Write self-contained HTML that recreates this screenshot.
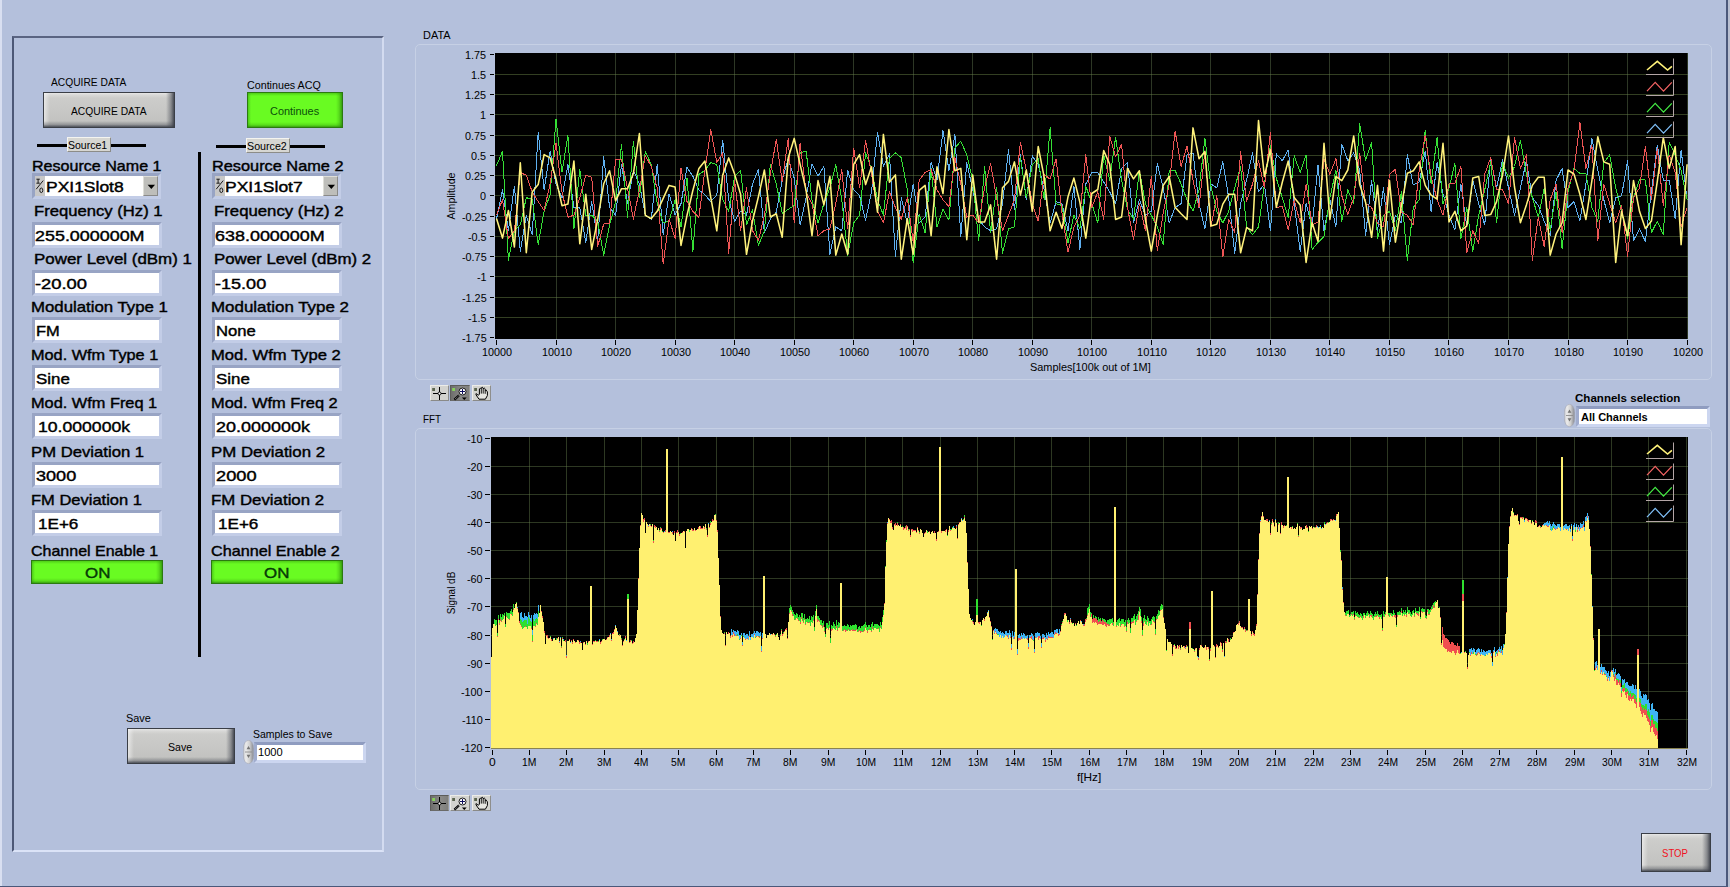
<!DOCTYPE html>
<html><head><meta charset="utf-8"><title>Front Panel</title>
<style>
html,body{margin:0;padding:0}
body{width:1730px;height:887px;overflow:hidden;background:#b4c0dc;position:relative;font-family:"Liberation Sans",sans-serif}
body>div,body>svg,body>span{position:absolute;display:block}
.t{white-space:nowrap;line-height:1;transform-origin:0 0}
.fld{background:#fff;border-style:solid;border-width:3px;border-color:#98a4c4 #c3cde7 #c3cde7 #98a4c4}
.fld2{background:#fff;border-style:solid;border-width:3px;border-color:#8f9cc0 #ccd6f0 #ccd6f0 #a0acce}
.gbtn{box-sizing:border-box;border:1px solid #3a3e46;background:
 linear-gradient(to left,rgba(58,62,72,.9),rgba(70,74,84,.5) 3px,rgba(90,94,100,0) 8px),
 linear-gradient(to top,rgba(58,62,72,.85),rgba(80,84,92,.4) 2.5px,rgba(90,94,100,0) 6px),
 linear-gradient(to right,rgba(255,255,255,.55),rgba(255,255,255,.25) 3px,rgba(255,255,255,0) 6px),
 linear-gradient(to bottom,rgba(255,255,255,.5),rgba(255,255,255,.2) 2px,rgba(255,255,255,0) 5px),
 linear-gradient(#cfcfcd,#c0c0be)}
.grn{box-sizing:border-box;border:1px solid #2b7a10;background:
 linear-gradient(to left,rgba(40,130,10,.75),rgba(50,150,14,.3) 3px,rgba(60,160,20,0) 6px),
 linear-gradient(to top,rgba(40,130,10,.75),rgba(50,150,14,.3) 2px,rgba(60,160,20,0) 5px),
 linear-gradient(to right,rgba(50,150,14,.45),rgba(60,160,20,0) 3px),
 linear-gradient(to bottom,rgba(50,150,14,.45),rgba(60,160,20,0) 3px),
 #69fb22}
</style></head>
<body>
<div style="left:0px;top:0px;width:2px;height:887px;background:#d9dff1"></div>
<div style="left:1726px;top:0px;width:2px;height:887px;background:#4b587a"></div>
<div style="left:1728px;top:0px;width:2px;height:887px;background:#b9bfd0"></div>
<div style="left:0px;top:885.5px;width:1728px;height:1.5px;background:#4b587a"></div>
<div style="left:12px;top:36px;width:372px;height:816px;box-sizing:border-box;border-top:2px solid #5a6482;border-left:2px solid #4d5876;border-right:2px solid #d3dbf0;border-bottom:2px solid #dbe3f7"></div>
<div class="gbtn" style="left:43px;top:92px;width:132px;height:36px"></div>
<div class="grn" style="left:247px;top:92px;width:96px;height:36px"></div>
<div style="left:37px;top:144px;width:109px;height:3px;background:#000"></div>
<div style="left:67px;top:137px;width:44px;height:15px;box-sizing:border-box;background:#d6d6d2;border-top:1px solid #f4f4f0;border-left:1px solid #f4f4f0;border-right:1px solid #8c8c88;border-bottom:1px solid #8c8c88"></div>
<div style="left:216px;top:145px;width:109px;height:3px;background:#000"></div>
<div style="left:246px;top:138px;width:44px;height:15px;box-sizing:border-box;background:#d6d6d2;border-top:1px solid #f4f4f0;border-left:1px solid #f4f4f0;border-right:1px solid #8c8c88;border-bottom:1px solid #8c8c88"></div>
<div style="left:198px;top:152px;width:3px;height:505px;background:#000"></div>
<div class="fld" style="left:32px;top:173px;width:123.3px;height:19.5px"></div>
<div style="left:35px;top:176px;width:9.6px;height:19.5px;background:#c8c8c8"></div>
<svg style="left:35px;top:176px" width="10" height="20" viewBox="0 0 10 20"><g stroke="#1c1c1c" stroke-width="1" fill="none"><path d="M1.4 3.2h3.4M3.1 3.2v4M1.4 7.2h3.4"/><path d="M8.2 4.6L1.2 13.2"/><ellipse cx="6.3" cy="14.3" rx="1.5" ry="2.3"/></g></svg>
<div style="left:142.9px;top:176px;width:15.4px;height:19.5px;box-sizing:border-box;background:#bebeba;border-top:1px solid #deded8;border-left:1px solid #deded8;border-right:1.5px solid #8a8a88;border-bottom:1.5px solid #8a8a88"></div>
<svg style="left:146.6px;top:183.6px" width="9" height="6" viewBox="0 0 9 6"><path d="M0.6 0.8h7.4L4.3 5z" fill="#000"/></svg>
<div class="fld" style="left:32px;top:222px;width:123.7px;height:20px"></div>
<div class="fld" style="left:32px;top:270px;width:123.7px;height:20px"></div>
<div class="fld" style="left:32px;top:317px;width:123.7px;height:20px"></div>
<div class="fld" style="left:32px;top:365px;width:123.7px;height:20px"></div>
<div class="fld" style="left:32px;top:413px;width:123.7px;height:20px"></div>
<div class="fld" style="left:32px;top:462px;width:123.7px;height:20px"></div>
<div class="fld" style="left:32px;top:510px;width:123.7px;height:20px"></div>
<div class="grn" style="left:31px;top:560px;width:132px;height:24px"></div>
<div class="fld" style="left:212px;top:173px;width:123.3px;height:19.5px"></div>
<div style="left:215px;top:176px;width:9.6px;height:19.5px;background:#c8c8c8"></div>
<svg style="left:215px;top:176px" width="10" height="20" viewBox="0 0 10 20"><g stroke="#1c1c1c" stroke-width="1" fill="none"><path d="M1.4 3.2h3.4M3.1 3.2v4M1.4 7.2h3.4"/><path d="M8.2 4.6L1.2 13.2"/><ellipse cx="6.3" cy="14.3" rx="1.5" ry="2.3"/></g></svg>
<div style="left:322.9px;top:176px;width:15.4px;height:19.5px;box-sizing:border-box;background:#bebeba;border-top:1px solid #deded8;border-left:1px solid #deded8;border-right:1.5px solid #8a8a88;border-bottom:1.5px solid #8a8a88"></div>
<svg style="left:326.6px;top:183.6px" width="9" height="6" viewBox="0 0 9 6"><path d="M0.6 0.8h7.4L4.3 5z" fill="#000"/></svg>
<div class="fld" style="left:212px;top:222px;width:123.7px;height:20px"></div>
<div class="fld" style="left:212px;top:270px;width:123.7px;height:20px"></div>
<div class="fld" style="left:212px;top:317px;width:123.7px;height:20px"></div>
<div class="fld" style="left:212px;top:365px;width:123.7px;height:20px"></div>
<div class="fld" style="left:212px;top:413px;width:123.7px;height:20px"></div>
<div class="fld" style="left:212px;top:462px;width:123.7px;height:20px"></div>
<div class="fld" style="left:212px;top:510px;width:123.7px;height:20px"></div>
<div class="grn" style="left:211px;top:560px;width:132px;height:24px"></div>
<div class="gbtn" style="left:127px;top:728px;width:108px;height:36px"></div>
<svg style="left:243px;top:740px" width="11" height="24" viewBox="0 0 11 24"><defs><linearGradient id="sp243" x1="0" x2="1" y1="0" y2="0"><stop offset="0" stop-color="#c4c6cc"/><stop offset="0.25" stop-color="#ececec"/><stop offset="0.6" stop-color="#d0d0d0"/><stop offset="1" stop-color="#84868e"/></linearGradient></defs><rect x="0.3" y="0.3" width="10.4" height="23.4" rx="5.2" ry="8.5" fill="url(#sp243)" stroke="#a4a8b6" stroke-width="0.6"/><path d="M2 12H9" stroke="#8c8c8c" stroke-width="0.9"/><path d="M5.5 6l1.9 3.2h-3.8z M5.5 18l1.9 -3.2h-3.8z" fill="#747474"/></svg>
<div class="fld2" style="left:254px;top:742px;width:105.5px;height:14.5px"></div>
<div style="left:415px;top:44px;width:1297px;height:336px;box-sizing:border-box;border:1.6px solid #c6d0e5;border-radius:5px;background:#b5c1dc"></div>
<div style="left:415px;top:428px;width:1297px;height:362px;box-sizing:border-box;border:1.6px solid #c6d0e5;border-radius:5px;background:#b5c1dc"></div>
<svg style="left:495px;top:53px" width="1193" height="286" viewBox="0 0 1193 286"><rect width="1193" height="286" fill="#000"/><path d="M0 21.5H1193M0 41.5H1193M0 61.5H1193M0 82.5H1193M0 102.5H1193M0 122.5H1193M0 142.5H1193M0 163.5H1193M0 183.5H1193M0 203.5H1193M0 223.5H1193M0 244.5H1193M0 264.5H1193" stroke="#74904e" stroke-opacity=".44" stroke-width="1" fill="none" shape-rendering="crispEdges"/><path d="M61.5 0V286M120.5 0V286M180.5 0V286M239.5 0V286M299.5 0V286M358.5 0V286M418.5 0V286M477.5 0V286M537.5 0V286M596.5 0V286M656.5 0V286M715.5 0V286M775.5 0V286M834.5 0V286M894.5 0V286M953.5 0V286M1013.5 0V286M1073.5 0V286M1132.5 0V286M1192.5 0V286" stroke="#667e54" stroke-opacity=".44" stroke-width="1" fill="none" shape-rendering="crispEdges"/><polyline points="1.5,166.1 7.5,136.9 13.4,177.8 19.4,133.0 25.3,198.3 31.3,162.2 37.2,181.7 43.2,79.4 49.1,136.9 55.1,98.0 61.0,131.0 67.0,144.7 72.9,111.6 78.9,154.5 84.8,154.5 90.8,189.5 96.7,148.6 102.7,187.5 108.7,103.8 114.6,154.5 120.6,162.2 126.5,111.6 132.5,150.6 138.4,117.4 144.4,131.0 150.3,162.2 156.3,166.1 162.2,111.6 168.2,181.7 174.1,140.8 180.1,162.2 186.0,150.6 192.0,114.5 197.9,123.3 203.9,136.9 209.9,141.8 215.8,148.6 221.8,141.8 227.7,87.2 233.7,146.7 239.6,168.1 245.6,158.3 251.5,162.2 257.5,131.0 263.4,116.4 269.4,179.7 275.3,166.1 281.3,159.3 287.2,127.1 293.2,105.8 299.2,125.2 305.1,172.0 311.1,144.7 317.0,110.6 323.0,123.3 328.9,113.5 334.9,201.2 340.8,173.9 346.8,177.8 352.7,117.4 358.7,136.9 364.6,142.8 370.6,167.1 376.5,138.9 382.5,79.4 388.4,113.5 394.4,100.9 400.4,203.2 406.3,144.7 412.3,170.0 418.2,131.0 424.2,170.0 430.1,164.2 436.1,109.6 442.0,127.1 448.0,77.5 453.9,117.4 459.9,81.4 465.8,183.6 471.8,109.6 477.7,136.9 483.7,166.1 489.6,173.9 495.6,177.8 501.6,175.9 507.5,150.6 513.5,97.0 519.4,156.4 525.4,101.9 531.3,146.7 537.3,102.8 543.2,111.6 549.2,136.9 555.1,170.0 561.1,148.6 567.0,150.6 573.0,177.8 578.9,133.0 584.9,196.4 590.8,131.0 596.8,119.4 602.8,119.4 608.7,129.1 614.7,138.9 620.6,150.6 626.6,115.5 632.5,109.6 638.5,170.0 644.4,146.7 650.4,162.2 656.3,158.3 662.3,110.6 668.2,134.9 674.2,170.0 680.1,154.5 686.1,150.6 692.0,101.9 698.0,99.9 704.0,150.6 709.9,175.9 715.9,131.0 721.8,134.9 727.8,108.7 733.7,144.7 739.7,200.2 745.6,150.6 751.6,127.1 757.5,99.9 763.5,138.9 769.4,131.0 775.4,177.8 781.3,100.9 787.3,107.7 793.2,97.0 799.2,150.6 805.2,198.3 811.1,150.6 817.1,173.9 823.0,111.6 829.0,177.8 834.9,146.7 840.9,173.9 846.8,91.2 852.8,107.7 858.7,99.9 864.7,117.4 870.6,182.7 876.6,127.1 882.5,177.8 888.5,134.9 894.5,191.5 900.4,162.2 906.4,170.0 912.3,101.9 918.3,132.0 924.2,129.1 930.2,98.0 936.1,158.3 942.1,109.6 948.0,140.8 954.0,162.2 959.9,176.8 965.9,131.0 971.8,173.9 977.8,127.1 983.7,150.6 989.7,172.0 995.7,105.8 1001.6,134.9 1007.6,106.7 1013.5,134.9 1019.5,162.2 1025.4,134.9 1031.4,107.7 1037.3,144.7 1043.3,152.5 1049.2,168.1 1055.2,182.7 1061.1,127.1 1067.1,115.5 1073.0,154.5 1079.0,148.6 1084.9,168.1 1090.9,131.0 1096.9,85.2 1102.8,117.4 1108.8,146.7 1114.7,170.0 1120.7,144.7 1126.6,142.8 1132.6,107.7 1138.5,187.5 1144.5,175.9 1150.4,188.5 1156.4,138.9 1162.3,92.1 1168.3,127.1 1174.2,127.1 1180.2,166.1 1186.1,97.0 1192.1,146.7" fill="none" stroke="#5fb0f0" stroke-width="1" stroke-linejoin="round" shape-rendering="crispEdges"/><polyline points="1.5,112.6 7.5,98.4 13.4,207.1 19.4,177.8 25.3,172.0 31.3,144.7 37.2,146.3 43.2,191.5 49.1,158.3 55.1,141.8 61.0,66.4 67.0,119.4 72.9,82.3 78.9,175.9 84.8,116.4 90.8,162.2 96.7,162.2 102.7,168.1 108.7,202.2 114.6,172.0 120.6,148.6 126.5,91.2 132.5,164.2 138.4,88.2 144.4,144.7 150.3,98.4 156.3,111.6 162.2,150.6 168.2,170.0 174.1,168.1 180.1,146.7 186.0,173.9 192.0,125.2 197.9,198.3 203.9,121.3 209.9,117.4 215.8,109.6 221.8,111.6 227.7,146.7 233.7,158.3 239.6,123.3 245.6,117.4 251.5,172.0 257.5,156.4 263.4,192.5 269.4,177.8 275.3,111.6 281.3,131.0 287.2,160.3 293.2,156.4 299.2,152.5 305.1,99.9 311.1,98.0 317.0,146.7 323.0,170.0 328.9,150.6 334.9,134.9 340.8,111.6 346.8,146.7 352.7,202.2 358.7,170.0 364.6,162.2 370.6,99.9 376.5,115.5 382.5,146.7 388.4,162.2 394.4,105.8 400.4,99.9 406.3,104.8 412.3,136.9 418.2,210.0 424.2,161.3 430.1,179.7 436.1,115.5 442.0,173.9 448.0,156.4 453.9,167.1 459.9,95.1 465.8,88.2 471.8,101.9 477.7,127.1 483.7,187.5 489.6,113.5 495.6,179.7 501.6,134.9 507.5,200.2 513.5,175.9 519.4,173.9 525.4,104.8 531.3,144.7 537.3,111.6 543.2,105.8 549.2,146.7 555.1,74.6 561.1,150.6 567.0,152.5 573.0,189.5 578.9,162.2 584.9,175.9 590.8,133.0 596.8,150.6 602.8,170.0 608.7,101.9 614.7,127.1 620.6,84.3 626.6,127.1 632.5,156.4 638.5,166.1 644.4,117.4 650.4,150.6 656.3,162.2 662.3,173.9 668.2,191.5 674.2,117.4 680.1,117.4 686.1,131.0 692.0,146.7 698.0,158.3 704.0,136.9 709.9,85.2 715.9,133.0 721.8,158.3 727.8,170.0 733.7,158.3 739.7,134.9 745.6,113.5 751.6,173.9 757.5,181.7 763.5,173.9 769.4,131.0 775.4,92.1 781.3,125.2 787.3,144.7 793.2,164.2 799.2,102.8 805.2,119.4 811.1,101.9 817.1,196.4 823.0,189.5 829.0,183.6 834.9,144.7 840.9,117.4 846.8,168.1 852.8,136.9 858.7,150.6 864.7,70.7 870.6,107.7 876.6,89.2 882.5,185.6 888.5,162.2 894.5,158.3 900.4,177.8 906.4,138.9 912.3,207.1 918.3,154.5 924.2,146.7 930.2,77.5 936.1,131.0 942.1,84.3 948.0,150.6 954.0,134.9 959.9,110.6 965.9,185.6 971.8,154.5 977.8,198.3 983.7,162.2 989.7,136.9 995.7,108.7 1001.6,170.0 1007.6,109.6 1013.5,125.2 1019.5,113.5 1025.4,87.2 1031.4,121.3 1037.3,144.7 1043.3,164.2 1049.2,134.9 1055.2,177.8 1061.1,138.9 1067.1,195.4 1073.0,138.9 1079.0,115.5 1084.9,120.3 1090.9,120.3 1096.9,154.5 1102.8,168.1 1108.8,109.6 1114.7,101.9 1120.7,134.9 1126.6,158.3 1132.6,185.6 1138.5,144.7 1144.5,126.2 1150.4,127.1 1156.4,179.7 1162.3,168.1 1168.3,181.7 1174.2,89.2 1180.2,101.9 1186.1,117.4 1192.1,146.7" fill="none" stroke="#35e035" stroke-width="1" stroke-linejoin="round" shape-rendering="crispEdges"/><polyline points="1.5,162.2 7.5,146.7 13.4,185.6 19.4,177.8 25.3,119.4 31.3,122.3 37.2,138.9 43.2,148.6 49.1,157.4 55.1,131.0 61.0,90.2 67.0,138.9 72.9,164.2 78.9,162.2 84.8,144.7 90.8,122.3 96.7,124.2 102.7,193.4 108.7,171.0 114.6,170.0 120.6,106.7 126.5,106.7 132.5,134.9 138.4,166.1 144.4,136.9 150.3,102.8 156.3,113.5 162.2,134.9 168.2,210.9 174.1,166.1 180.1,185.6 186.0,115.5 192.0,148.6 197.9,158.3 203.9,164.2 209.9,117.4 215.8,76.5 221.8,109.6 227.7,99.9 233.7,200.2 239.6,127.1 245.6,177.8 251.5,134.9 257.5,177.8 263.4,187.5 269.4,162.2 275.3,121.3 281.3,86.2 287.2,129.1 293.2,85.2 299.2,170.0 305.1,90.2 311.1,138.9 317.0,150.6 323.0,182.7 328.9,177.8 334.9,175.9 340.8,150.6 346.8,116.4 352.7,175.9 358.7,95.1 364.6,134.9 370.6,87.2 376.5,121.3 382.5,158.3 388.4,170.0 394.4,138.9 400.4,154.5 406.3,166.1 412.3,144.7 418.2,189.5 424.2,127.1 430.1,119.4 436.1,116.4 442.0,136.9 448.0,146.7 453.9,153.5 459.9,104.8 465.8,131.0 471.8,164.2 477.7,162.2 483.7,170.0 489.6,134.9 495.6,110.6 501.6,144.7 507.5,177.8 513.5,162.2 519.4,146.7 525.4,89.2 531.3,117.4 537.3,150.6 543.2,168.1 549.2,121.3 555.1,126.2 561.1,105.8 567.0,160.3 573.0,199.3 578.9,173.9 584.9,162.2 590.8,101.9 596.8,154.5 602.8,138.9 608.7,166.1 614.7,83.3 620.6,103.8 626.6,91.2 632.5,154.5 638.5,186.5 644.4,150.6 650.4,177.8 656.3,123.3 662.3,197.3 668.2,160.3 674.2,131.0 680.1,78.1 686.1,113.5 692.0,93.1 698.0,127.1 704.0,154.5 709.9,98.0 715.9,173.9 721.8,142.8 727.8,204.1 733.7,166.1 739.7,179.7 745.6,98.9 751.6,148.6 757.5,131.0 763.5,107.7 769.4,134.9 775.4,79.4 781.3,154.5 787.3,153.5 793.2,176.8 799.2,146.7 805.2,170.0 811.1,131.0 817.1,172.0 823.0,169.0 829.0,105.8 834.9,121.3 840.9,105.8 846.8,142.8 852.8,161.3 858.7,144.7 864.7,100.9 870.6,150.6 876.6,154.5 882.5,170.0 888.5,173.9 894.5,121.3 900.4,116.4 906.4,159.3 912.3,162.2 918.3,172.0 924.2,117.4 930.2,82.3 936.1,123.3 942.1,146.7 948.0,162.2 954.0,131.0 959.9,130.1 965.9,113.5 971.8,199.3 977.8,177.8 983.7,190.5 989.7,121.3 995.7,104.8 1001.6,136.9 1007.6,136.9 1013.5,150.6 1019.5,84.3 1025.4,115.5 1031.4,101.9 1037.3,207.1 1043.3,164.2 1049.2,193.4 1055.2,146.7 1061.1,131.0 1067.1,179.7 1073.0,134.9 1079.0,117.4 1084.9,69.7 1090.9,115.5 1096.9,92.1 1102.8,187.5 1108.8,131.0 1114.7,150.6 1120.7,170.0 1126.6,152.5 1132.6,203.2 1138.5,144.7 1144.5,134.9 1150.4,93.1 1156.4,146.7 1162.3,95.1 1168.3,152.5 1174.2,101.9 1180.2,119.4 1186.1,173.9 1192.1,154.5" fill="none" stroke="#ee5555" stroke-width="1" stroke-linejoin="round" shape-rendering="crispEdges"/><polyline points="1.5,165.6 7.5,185.1 13.4,157.5 19.4,194.0 25.3,109.7 31.3,199.7 37.2,138.9 43.2,131.6 49.1,101.6 55.1,104.9 61.0,125.9 67.0,152.7 72.9,151.1 78.9,108.1 84.8,190.8 90.8,141.3 96.7,196.4 102.7,166.5 108.7,130.8 114.6,117.8 120.6,147.8 126.5,135.7 132.5,135.7 138.4,120.3 144.4,80.5 150.3,162.4 156.3,165.6 162.2,158.3 168.2,145.4 174.1,132.4 180.1,134.0 186.0,192.4 192.0,162.4 197.9,137.3 203.9,115.4 209.9,108.1 215.8,144.6 221.8,177.8 227.7,121.9 233.7,104.9 239.6,121.1 245.6,141.3 251.5,201.3 257.5,168.1 263.4,143.8 269.4,117.0 275.3,164.0 281.3,160.8 287.2,184.3 293.2,104.9 299.2,85.4 305.1,111.3 311.1,137.3 317.0,182.7 323.0,127.6 328.9,151.9 334.9,123.5 340.8,202.1 346.8,181.0 352.7,201.3 358.7,111.3 364.6,101.6 370.6,131.6 376.5,113.8 382.5,159.2 388.4,81.4 394.4,129.2 400.4,121.9 406.3,206.2 412.3,165.6 418.2,201.3 424.2,137.3 430.1,132.4 436.1,182.7 442.0,113.8 448.0,140.5 453.9,76.5 459.9,117.8 465.8,115.4 471.8,186.7 477.7,121.9 483.7,168.9 489.6,168.9 495.6,151.9 501.6,206.2 507.5,134.8 513.5,128.4 519.4,108.9 525.4,142.1 531.3,117.0 537.3,158.3 543.2,93.5 549.2,124.3 555.1,177.8 561.1,159.2 567.0,175.4 573.0,143.8 578.9,125.1 584.9,149.4 590.8,185.1 596.8,140.5 602.8,136.5 608.7,97.6 614.7,111.3 620.6,166.5 626.6,164.0 632.5,115.4 638.5,125.9 644.4,117.8 650.4,166.5 656.3,198.1 662.3,162.4 668.2,132.4 674.2,123.5 680.1,154.3 686.1,160.8 692.0,166.5 698.0,74.9 704.0,105.7 709.9,98.4 715.9,172.9 721.8,171.3 727.8,151.1 733.7,141.3 739.7,141.3 745.6,199.7 751.6,174.6 757.5,177.8 763.5,67.6 769.4,123.5 775.4,96.8 781.3,154.3 787.3,129.2 793.2,108.1 799.2,144.6 805.2,151.9 811.1,209.4 817.1,169.7 823.0,188.3 829.0,90.3 834.9,166.5 840.9,123.5 846.8,127.6 852.8,117.0 858.7,83.0 864.7,131.6 870.6,149.4 876.6,184.3 882.5,132.4 888.5,198.1 894.5,127.6 900.4,189.1 906.4,152.7 912.3,120.3 918.3,117.8 924.2,108.9 930.2,132.4 936.1,142.1 942.1,146.2 948.0,90.3 954.0,168.9 959.9,158.3 965.9,177.8 971.8,172.9 977.8,125.1 983.7,123.5 989.7,162.4 995.7,161.6 1001.6,148.6 1007.6,121.9 1013.5,83.0 1019.5,134.0 1025.4,169.7 1031.4,151.9 1037.3,132.4 1043.3,124.3 1049.2,124.3 1055.2,202.1 1061.1,181.0 1067.1,169.7 1073.0,117.0 1079.0,121.1 1084.9,141.3 1090.9,166.5 1096.9,127.6 1102.8,83.8 1108.8,108.9 1114.7,111.3 1120.7,209.4 1126.6,158.3 1132.6,182.7 1138.5,127.6 1144.5,158.3 1150.4,175.4 1156.4,168.1 1162.3,128.4 1168.3,84.6 1174.2,115.4 1180.2,93.5 1186.1,191.6 1192.1,111.3" fill="none" stroke="#fff27c" stroke-width="1.55" stroke-linejoin="round" shape-rendering="auto"/><path d="M1151 21.5H1178.5V5.5" fill="none" stroke="#b4a6a6" stroke-width="1"/><polyline points="1152,17 1162.3,8.3 1172.6,17 1176.9,13.3" fill="none" stroke="#fff27a" stroke-width="1.6"/><path d="M1151 42.5H1178.5V26.5" fill="none" stroke="#b4a6a6" stroke-width="1"/><polyline points="1152,38.1 1160.2,29.4 1168.5,38.1 1176.8,29.4" fill="none" stroke="#f46464" stroke-width="1.25"/><path d="M1151 63.5H1178.5V47.5" fill="none" stroke="#b4a6a6" stroke-width="1"/><polyline points="1152,59.1 1160.2,50.4 1168.5,59.1 1176.8,50.4" fill="none" stroke="#44ec44" stroke-width="1.25"/><path d="M1151 84.5H1178.5V68.5" fill="none" stroke="#b4a6a6" stroke-width="1"/><polyline points="1152,80.1 1160.2,71.4 1168.5,80.1 1176.8,71.4" fill="none" stroke="#80c0f8" stroke-width="1.25"/></svg>
<svg style="left:491px;top:437px" width="1197" height="312" viewBox="0 0 1197 312" shape-rendering="crispEdges"><rect width="1197" height="312" fill="#000"/><path d="M0 29.5H1197M0 57.5H1197M0 85.5H1197M0 113.5H1197M0 141.5H1197M0 169.5H1197M0 198.5H1197M0 226.5H1197M0 254.5H1197M0 282.5H1197" stroke="#68824e" stroke-opacity=".43" stroke-width="1" fill="none"/><path d="M38.5 0V312M75.5 0V312M113.5 0V312M150.5 0V312M187.5 0V312M225.5 0V312M262.5 0V312M299.5 0V312M337.5 0V312M374.5 0V312M411.5 0V312M449.5 0V312M486.5 0V312M523.5 0V312M560.5 0V312M598.5 0V312M635.5 0V312M672.5 0V312M710.5 0V312M747.5 0V312M784.5 0V312M822.5 0V312M859.5 0V312M896.5 0V312M934.5 0V312M971.5 0V312M1008.5 0V312M1045.5 0V312M1083.5 0V312M1120.5 0V312M1157.5 0V312M1195.5 0V312" stroke="#68824e" stroke-opacity=".43" stroke-width="1" fill="none"/><path d="M0.4 312L0.4 221.1H1.4L1.4 194.2H2.4L2.4 187.4H3.4L3.4 189.2H4.4L4.4 189.1H5.4L5.4 190.0H6.4L6.4 199.2H7.4L7.4 182.7H8.4L8.4 186.5H9.4L9.4 183.3H10.4L10.4 184.2H11.4L11.4 183.3H12.4L12.4 183.4H13.4L13.4 179.9H14.4L14.4 191.8H15.4L15.4 180.4H16.4L16.4 181.0H17.4L17.4 182.1H18.4L18.4 181.9H19.4L19.4 176.6H20.4L20.4 177.5H21.4L21.4 179.4H22.4L22.4 172.6H23.4L23.4 173.6H24.4L24.4 168.6H25.4L25.4 166.5H26.4L26.4 169.6H27.4L27.4 176.4H28.4L28.4 184.8H29.4L29.4 176.3H30.4L30.4 175.4H31.4L31.4 179.9H32.4L32.4 180.9H33.4L33.4 176.1H34.4L34.4 179.1H35.4L35.4 178.9H36.4L36.4 180.1H37.4L37.4 175.0H38.4L38.4 178.4H39.4L39.4 180.7H40.4L40.4 178.4H41.4L41.4 192.6H42.4L42.4 178.4H43.4L43.4 176.4H44.4L44.4 177.3H45.4L45.4 175.7H46.4L46.4 177.1H47.4L47.4 167.7H48.4L48.4 175.9H49.4L49.4 168.2H50.4L50.4 174.6H51.4L51.4 179.0H52.4L52.4 185.4H53.4L53.4 196.0H54.4L54.4 207.7H55.4L55.4 198.4H56.4L56.4 199.7H57.4L57.4 201.7H58.4L58.4 202.5H59.4L59.4 200.8H60.4L60.4 202.7H61.4L61.4 205.6H62.4L62.4 200.6H63.4L63.4 201.7H64.4L64.4 203.9H65.4L65.4 202.0H66.4L66.4 201.9H67.4L67.4 200.3H68.4L68.4 203.7H69.4L69.4 199.9H70.4L70.4 211.0H71.4L71.4 200.9H72.4L72.4 201.8H73.4L73.4 205.1H74.4L74.4 204.3H75.4L75.4 218.1H76.4L76.4 206.1H77.4L77.4 205.2H78.4L78.4 202.3H79.4L79.4 205.4H80.4L80.4 203.5H81.4L81.4 207.3H82.4L82.4 201.9H83.4L83.4 204.0H84.4L84.4 205.6H85.4L85.4 205.7H86.4L86.4 203.8H87.4L87.4 205.1H88.4L88.4 207.4H89.4L89.4 204.0H90.4L90.4 206.9H91.4L91.4 213.1H92.4L92.4 206.5H93.4L93.4 205.5H94.4L94.4 206.6H95.4L95.4 204.6H96.4L96.4 208.2H97.4L97.4 207.8H98.4L98.4 204.1H99.4L99.4 153.6H100.4L100.4 153.6H101.4L101.4 208.0H102.4L102.4 205.0H103.4L103.4 205.2H104.4L104.4 205.4H105.4L105.4 204.7H106.4L106.4 205.8H107.4L107.4 204.7H108.4L108.4 201.8H109.4L109.4 205.5H110.4L110.4 204.3H111.4L111.4 202.6H112.4L112.4 202.9H113.4L113.4 202.2H114.4L114.4 204.3H115.4L115.4 204.4H116.4L116.4 202.7H117.4L117.4 202.6H118.4L118.4 198.9H119.4L119.4 196.2H120.4L120.4 202.1H121.4L121.4 195.6H122.4L122.4 196.7H123.4L123.4 192.3H124.4L124.4 188.3H125.4L125.4 191.6H126.4L126.4 194.1H127.4L127.4 198.6H128.4L128.4 199.2H129.4L129.4 198.1H130.4L130.4 203.0H131.4L131.4 208.3H132.4L132.4 205.1H133.4L133.4 203.1H134.4L134.4 203.0H135.4L135.4 202.9H136.4L136.4 165.7H137.4L137.4 165.7H138.4L138.4 206.1H139.4L139.4 204.0H140.4L140.4 203.1H141.4L141.4 206.3H142.4L142.4 205.2H143.4L143.4 207.3H144.4L144.4 203.8H145.4L145.4 197.1H146.4L146.4 173.1H147.4L147.4 142.7H148.4L148.4 111.5H149.4L149.4 89.9H150.4L150.4 76.9H151.4L151.4 77.7H152.4L152.4 84.8H153.4L153.4 81.0H154.4L154.4 96.6H155.4L155.4 86.4H156.4L156.4 88.8H157.4L157.4 87.7H158.4L158.4 89.3H159.4L159.4 89.1H160.4L160.4 89.4H161.4L161.4 88.0H162.4L162.4 104.2H163.4L163.4 88.0H164.4L164.4 91.0H165.4L165.4 90.7H166.4L166.4 94.5H167.4L167.4 91.7H168.4L168.4 94.6H169.4L169.4 90.9H170.4L170.4 92.6H171.4L171.4 95.3H172.4L172.4 96.7H173.4L173.4 93.6H174.4L174.4 93.1H175.4L175.4 16.1H176.4L176.4 16.1H177.4L177.4 96.1H178.4L178.4 96.6H179.4L179.4 95.4H180.4L180.4 95.1H181.4L181.4 94.4H182.4L182.4 98.6H183.4L183.4 95.7H184.4L184.4 105.3H185.4L185.4 96.4H186.4L186.4 95.5H187.4L187.4 96.2H188.4L188.4 97.7H189.4L189.4 97.7H190.4L190.4 97.0H191.4L191.4 96.6H192.4L192.4 95.7H193.4L193.4 96.2H194.4L194.4 112.0H195.4L195.4 95.7H196.4L196.4 92.9H197.4L197.4 93.0H198.4L198.4 95.5H199.4L199.4 92.8H200.4L200.4 91.6H201.4L201.4 91.9H202.4L202.4 94.1H203.4L203.4 92.8H204.4L204.4 94.3H205.4L205.4 93.6H206.4L206.4 92.4H207.4L207.4 91.6H208.4L208.4 89.5H209.4L209.4 90.4H210.4L210.4 92.3H211.4L211.4 90.6H212.4L212.4 90.4H213.4L213.4 91.1H214.4L214.4 88.1H215.4L215.4 92.0H216.4L216.4 98.8H217.4L217.4 86.0H218.4L218.4 90.8H219.4L219.4 85.3H220.4L220.4 85.9H221.4L221.4 82.5H222.4L222.4 83.5H223.4L223.4 78.0H224.4L224.4 77.6H225.4L225.4 83.6H226.4L226.4 93.7H227.4L227.4 121.3H228.4L228.4 150.6H229.4L229.4 179.6H230.4L230.4 195.6H231.4L231.4 197.1H232.4L232.4 197.2H233.4L233.4 197.2H234.4L234.4 208.4H235.4L235.4 196.1H236.4L236.4 199.0H237.4L237.4 195.6H238.4L238.4 196.8H239.4L239.4 200.5H240.4L240.4 191.7H241.4L241.4 195.0H242.4L242.4 192.8H243.4L243.4 194.2H244.4L244.4 194.3H245.4L245.4 195.0H246.4L246.4 192.8H247.4L247.4 194.0H248.4L248.4 198.3H249.4L249.4 197.6H250.4L250.4 195.5H251.4L251.4 205.3H252.4L252.4 196.4H253.4L253.4 196.1H254.4L254.4 197.6H255.4L255.4 196.9H256.4L256.4 197.2H257.4L257.4 198.6H258.4L258.4 193.8H259.4L259.4 199.7H260.4L260.4 196.8H261.4L261.4 196.9H262.4L262.4 195.7H263.4L263.4 194.2H264.4L264.4 196.2H265.4L265.4 194.2H266.4L266.4 194.4H267.4L267.4 195.1H268.4L268.4 195.6H269.4L269.4 195.0H270.4L270.4 209.1H271.4L271.4 195.5H272.4L272.4 143.2H273.4L273.4 143.2H274.4L274.4 198.0H275.4L275.4 202.4H276.4L276.4 197.9H277.4L277.4 198.2H278.4L278.4 196.0H279.4L279.4 196.7H280.4L280.4 197.0H281.4L281.4 197.8H282.4L282.4 196.9H283.4L283.4 197.2H284.4L284.4 198.3H285.4L285.4 197.2H286.4L286.4 197.7H287.4L287.4 200.1H288.4L288.4 205.0H289.4L289.4 198.8H290.4L290.4 193.1H291.4L291.4 197.0H292.4L292.4 196.5H293.4L293.4 195.5H294.4L294.4 193.9H295.4L295.4 192.0H296.4L296.4 202.2H297.4L297.4 185.2H298.4L298.4 177.6H299.4L299.4 173.0H300.4L300.4 175.3H301.4L301.4 179.4H302.4L302.4 179.3H303.4L303.4 182.6H304.4L304.4 185.2H305.4L305.4 180.7H306.4L306.4 181.3H307.4L307.4 185.4H308.4L308.4 182.6H309.4L309.4 185.6H310.4L310.4 183.0H311.4L311.4 182.9H312.4L312.4 186.3H313.4L313.4 183.7H314.4L314.4 187.9H315.4L315.4 186.3H316.4L316.4 186.0H317.4L317.4 186.4H318.4L318.4 185.3H319.4L319.4 189.5H320.4L320.4 185.3H321.4L321.4 184.5H322.4L322.4 182.5H323.4L323.4 193.9H324.4L324.4 180.5H325.4L325.4 174.1H326.4L326.4 184.4H327.4L327.4 182.9H328.4L328.4 184.8H329.4L329.4 188.2H330.4L330.4 189.9H331.4L331.4 190.8H332.4L332.4 189.9H333.4L333.4 194.3H334.4L334.4 200.4H335.4L335.4 190.9H336.4L336.4 192.0H337.4L337.4 193.2H338.4L338.4 190.1H339.4L339.4 204.2H340.4L340.4 193.3H341.4L341.4 195.0H342.4L342.4 189.3H343.4L343.4 192.6H344.4L344.4 190.9H345.4L345.4 190.1H346.4L346.4 193.4H347.4L347.4 190.9H348.4L348.4 191.3H349.4L349.4 150.0H350.4L350.4 150.0H351.4L351.4 194.6H352.4L352.4 194.5H353.4L353.4 193.5H354.4L354.4 194.9H355.4L355.4 192.5H356.4L356.4 193.2H357.4L357.4 191.5H358.4L358.4 193.6H359.4L359.4 192.6H360.4L360.4 193.2H361.4L361.4 193.0H362.4L362.4 192.3H363.4L363.4 193.2H364.4L364.4 193.6H365.4L365.4 192.7H366.4L366.4 196.7H367.4L367.4 195.0H368.4L368.4 193.2H369.4L369.4 195.1H370.4L370.4 195.1H371.4L371.4 194.2H372.4L372.4 194.8H373.4L373.4 193.5H374.4L374.4 189.8H375.4L375.4 193.6H376.4L376.4 193.6H377.4L377.4 193.1H378.4L378.4 192.0H379.4L379.4 192.7H380.4L380.4 196.1H381.4L381.4 191.1H382.4L382.4 194.9H383.4L383.4 192.5H384.4L384.4 191.9H385.4L385.4 191.3H386.4L386.4 192.2H387.4L387.4 190.3H388.4L388.4 194.7H389.4L389.4 190.9H390.4L390.4 191.8H391.4L391.4 183.8H392.4L392.4 177.9H393.4L393.4 167.6H394.4L394.4 130.0H395.4L395.4 105.1H396.4L396.4 84.8H397.4L397.4 82.2H398.4L398.4 82.0H399.4L399.4 84.7H400.4L400.4 85.3H401.4L401.4 91.7H402.4L402.4 93.7H403.4L403.4 88.4H404.4L404.4 88.5H405.4L405.4 88.2H406.4L406.4 86.3H407.4L407.4 88.1H408.4L408.4 90.3H409.4L409.4 88.1H410.4L410.4 89.8H411.4L411.4 91.0H412.4L412.4 90.9H413.4L413.4 91.7H414.4L414.4 89.4H415.4L415.4 90.5H416.4L416.4 90.2H417.4L417.4 93.8H418.4L418.4 93.3H419.4L419.4 101.1H420.4L420.4 92.0H421.4L421.4 92.2H422.4L422.4 94.2H423.4L423.4 93.8H424.4L424.4 93.0H425.4L425.4 94.8H426.4L426.4 90.1H427.4L427.4 95.7H428.4L428.4 96.3H429.4L429.4 93.0H430.4L430.4 93.3H431.4L431.4 97.4H432.4L432.4 101.1H433.4L433.4 96.7H434.4L434.4 95.1H435.4L435.4 94.7H436.4L436.4 95.5H437.4L437.4 95.6H438.4L438.4 93.8H439.4L439.4 96.5H440.4L440.4 94.8H441.4L441.4 95.8H442.4L442.4 96.0H443.4L443.4 95.2H444.4L444.4 97.9H445.4L445.4 102.1H446.4L446.4 96.4H447.4L447.4 94.0H448.4L448.4 14.1H449.4L449.4 14.1H450.4L450.4 94.8H451.4L451.4 94.4H452.4L452.4 94.9H453.4L453.4 93.7H454.4L454.4 93.3H455.4L455.4 93.7H456.4L456.4 98.3H457.4L457.4 92.6H458.4L458.4 90.2H459.4L459.4 91.7H460.4L460.4 92.5H461.4L461.4 89.7H462.4L462.4 89.1H463.4L463.4 90.5H464.4L464.4 93.4H465.4L465.4 88.2H466.4L466.4 102.3H467.4L467.4 89.4H468.4L468.4 88.1H469.4L469.4 85.6H470.4L470.4 80.7H471.4L471.4 83.4H472.4L472.4 82.7H473.4L473.4 78.5H474.4L474.4 83.9H475.4L475.4 97.6H476.4L476.4 125.8H477.4L477.4 151.5H478.4L478.4 176.5H479.4L479.4 181.9H480.4L480.4 185.4H481.4L481.4 182.4H482.4L482.4 186.0H483.4L483.4 188.0H484.4L484.4 186.6H485.4L485.4 182.6H486.4L486.4 182.6H487.4L487.4 186.1H488.4L488.4 185.2H489.4L489.4 184.5H490.4L490.4 189.1H491.4L491.4 185.1H492.4L492.4 183.0H493.4L493.4 182.7H494.4L494.4 179.9H495.4L495.4 180.5H496.4L496.4 175.2H497.4L497.4 173.3H498.4L498.4 180.5H499.4L499.4 184.9H500.4L500.4 191.0H501.4L501.4 203.4H502.4L502.4 194.3H503.4L503.4 192.1H504.4L504.4 190.5H505.4L505.4 192.3H506.4L506.4 192.1H507.4L507.4 193.6H508.4L508.4 195.4H509.4L509.4 193.5H510.4L510.4 196.3H511.4L511.4 194.5H512.4L512.4 196.4H513.4L513.4 196.5H514.4L514.4 193.9H515.4L515.4 194.1H516.4L516.4 195.8H517.4L517.4 196.0H518.4L518.4 193.3H519.4L519.4 195.7H520.4L520.4 207.2H521.4L521.4 194.4H522.4L522.4 198.8H523.4L523.4 195.0H524.4L524.4 135.9H525.4L525.4 135.9H526.4L526.4 211.9H527.4L527.4 197.7H528.4L528.4 196.8H529.4L529.4 198.6H530.4L530.4 195.9H531.4L531.4 198.1H532.4L532.4 196.0H533.4L533.4 196.7H534.4L534.4 199.3H535.4L535.4 198.7H536.4L536.4 197.8H537.4L537.4 206.4H538.4L538.4 198.2H539.4L539.4 197.9H540.4L540.4 196.1H541.4L541.4 197.2H542.4L542.4 198.7H543.4L543.4 211.6H544.4L544.4 195.7H545.4L545.4 196.4H546.4L546.4 195.1H547.4L547.4 195.9H548.4L548.4 195.7H549.4L549.4 199.3H550.4L550.4 205.6H551.4L551.4 196.5H552.4L552.4 196.8H553.4L553.4 197.7H554.4L554.4 200.0H555.4L555.4 196.4H556.4L556.4 197.6H557.4L557.4 195.1H558.4L558.4 196.5H559.4L559.4 196.1H560.4L560.4 194.7H561.4L561.4 195.4H562.4L562.4 196.7H563.4L563.4 192.5H564.4L564.4 192.7H565.4L565.4 192.4H566.4L566.4 192.1H567.4L567.4 195.7H568.4L568.4 191.5H569.4L569.4 195.6H570.4L570.4 188.2H571.4L571.4 185.8H572.4L572.4 183.7H573.4L573.4 177.3H574.4L574.4 178.2H575.4L575.4 180.9H576.4L576.4 183.8H577.4L577.4 184.3H578.4L578.4 186.8H579.4L579.4 181.0H580.4L580.4 185.6H581.4L581.4 187.0H582.4L582.4 185.8H583.4L583.4 188.9H584.4L584.4 186.4H585.4L585.4 187.9H586.4L586.4 187.4H587.4L587.4 184.9H588.4L588.4 187.1H589.4L589.4 184.6H590.4L590.4 184.4H591.4L591.4 187.5H592.4L592.4 187.0H593.4L593.4 188.1H594.4L594.4 182.1H595.4L595.4 183.6H596.4L596.4 178.2H597.4L597.4 176.0H598.4L598.4 172.3H599.4L599.4 179.9H600.4L600.4 180.6H601.4L601.4 186.1H602.4L602.4 185.7H603.4L603.4 186.6H604.4L604.4 183.5H605.4L605.4 185.8H606.4L606.4 188.9H607.4L607.4 186.9H608.4L608.4 187.3H609.4L609.4 187.6H610.4L610.4 187.4H611.4L611.4 187.0H612.4L612.4 186.2H613.4L613.4 188.0H614.4L614.4 187.1H615.4L615.4 190.1H616.4L616.4 189.7H617.4L617.4 186.7H618.4L618.4 188.2H619.4L619.4 188.9H620.4L620.4 189.4H621.4L621.4 187.6H622.4L622.4 189.7H623.4L623.4 73.7H624.4L624.4 73.7H625.4L625.4 190.1H626.4L626.4 186.5H627.4L627.4 188.4H628.4L628.4 185.2H629.4L629.4 189.4H630.4L630.4 188.8H631.4L631.4 186.9H632.4L632.4 188.0H633.4L633.4 190.0H634.4L634.4 188.2H635.4L635.4 194.1H636.4L636.4 187.3H637.4L637.4 186.7H638.4L638.4 187.4H639.4L639.4 196.5H640.4L640.4 186.6H641.4L641.4 185.5H642.4L642.4 183.2H643.4L643.4 183.0H644.4L644.4 187.3H645.4L645.4 184.7H646.4L646.4 182.5H647.4L647.4 179.6H648.4L648.4 174.3H649.4L649.4 179.3H650.4L650.4 184.8H651.4L651.4 198.1H652.4L652.4 185.9H653.4L653.4 184.0H654.4L654.4 186.4H655.4L655.4 188.6H656.4L656.4 185.1H657.4L657.4 189.2H658.4L658.4 187.8H659.4L659.4 190.9H660.4L660.4 187.5H661.4L661.4 185.2H662.4L662.4 185.9H663.4L663.4 185.1H664.4L664.4 198.7H665.4L665.4 183.6H666.4L666.4 183.1H667.4L667.4 178.0H668.4L668.4 179.1H669.4L669.4 173.7H670.4L670.4 173.4H671.4L671.4 172.1H672.4L672.4 181.3H673.4L673.4 186.3H674.4L674.4 194.8H675.4L675.4 212.8H676.4L676.4 201.9H677.4L677.4 207.3H678.4L678.4 207.2H679.4L679.4 206.0H680.4L680.4 208.9H681.4L681.4 218.6H682.4L682.4 210.3H683.4L683.4 207.0H684.4L684.4 210.4H685.4L685.4 211.7H686.4L686.4 208.8H687.4L687.4 209.1H688.4L688.4 208.9H689.4L689.4 211.7H690.4L690.4 209.7H691.4L691.4 210.9H692.4L692.4 209.9H693.4L693.4 210.3H694.4L694.4 210.4H695.4L695.4 209.2H696.4L696.4 209.7H697.4L697.4 216.5H698.4L698.4 196.7H699.4L699.4 196.7H700.4L700.4 210.7H701.4L701.4 213.0H702.4L702.4 212.6H703.4L703.4 215.2H704.4L704.4 212.2H705.4L705.4 212.4H706.4L706.4 219.2H707.4L707.4 220.4H708.4L708.4 211.6H709.4L709.4 210.1H710.4L710.4 207.7H711.4L711.4 211.4H712.4L712.4 211.5H713.4L713.4 211.4H714.4L714.4 209.3H715.4L715.4 212.3H716.4L716.4 211.1H717.4L717.4 211.8H718.4L718.4 222.7H719.4L719.4 213.6H720.4L720.4 158.1H721.4L721.4 158.1H722.4L722.4 209.4H723.4L723.4 211.0H724.4L724.4 221.4H725.4L725.4 210.6H726.4L726.4 208.4H727.4L727.4 210.6H728.4L728.4 210.6H729.4L729.4 205.3H730.4L730.4 209.0H731.4L731.4 213.9H732.4L732.4 206.7H733.4L733.4 218.8H734.4L734.4 205.3H735.4L735.4 205.2H736.4L736.4 201.0H737.4L737.4 203.2H738.4L738.4 204.9H739.4L739.4 205.1H740.4L740.4 202.4H741.4L741.4 201.0H742.4L742.4 196.1H743.4L743.4 195.9H744.4L744.4 194.0H745.4L745.4 189.4H746.4L746.4 186.9H747.4L747.4 186.2H748.4L748.4 184.6H749.4L749.4 189.7H750.4L750.4 190.4H751.4L751.4 190.0H752.4L752.4 192.4H753.4L753.4 191.8H754.4L754.4 193.3H755.4L755.4 193.6H756.4L756.4 195.3H757.4L757.4 166.6H758.4L758.4 166.6H759.4L759.4 196.7H760.4L760.4 196.9H761.4L761.4 194.8H762.4L762.4 195.8H763.4L763.4 199.2H764.4L764.4 194.0H765.4L765.4 186.6H766.4L766.4 157.9H767.4L767.4 123.6H768.4L768.4 96.3H769.4L769.4 83.0H770.4L770.4 79.5H771.4L771.4 76.1H772.4L772.4 78.7H773.4L773.4 83.2H774.4L774.4 82.9H775.4L775.4 82.8H776.4L776.4 83.0H777.4L777.4 84.9H778.4L778.4 82.9H779.4L779.4 96.8H780.4L780.4 86.8H781.4L781.4 84.7H782.4L782.4 86.3H783.4L783.4 90.9H784.4L784.4 82.1H785.4L785.4 87.6H786.4L786.4 96.4H787.4L787.4 88.5H788.4L788.4 87.1H789.4L789.4 96.9H790.4L790.4 86.3H791.4L791.4 87.9H792.4L792.4 89.6H793.4L793.4 87.7H794.4L794.4 90.4H795.4L795.4 90.4H796.4L796.4 43.9H797.4L797.4 43.9H798.4L798.4 92.8H799.4L799.4 90.5H800.4L800.4 90.0H801.4L801.4 89.0H802.4L802.4 92.7H803.4L803.4 91.3H804.4L804.4 94.8H805.4L805.4 90.5H806.4L806.4 87.4H807.4L807.4 99.1H808.4L808.4 89.3H809.4L809.4 93.0H810.4L810.4 90.3H811.4L811.4 94.2H812.4L812.4 93.8H813.4L813.4 93.0H814.4L814.4 89.7H815.4L815.4 91.6H816.4L816.4 92.6H817.4L817.4 93.6H818.4L818.4 90.7H819.4L819.4 90.5H820.4L820.4 89.5H821.4L821.4 93.0H822.4L822.4 90.8H823.4L823.4 90.1H824.4L824.4 90.1H825.4L825.4 90.1H826.4L826.4 89.3H827.4L827.4 89.9H828.4L828.4 90.4H829.4L829.4 88.4H830.4L830.4 91.3H831.4L831.4 90.7H832.4L832.4 90.5H833.4L833.4 86.3H834.4L834.4 87.0H835.4L835.4 86.1H836.4L836.4 87.0H837.4L837.4 84.8H838.4L838.4 84.6H839.4L839.4 82.2H840.4L840.4 83.2H841.4L841.4 84.3H842.4L842.4 81.5H843.4L843.4 84.1H844.4L844.4 83.4H845.4L845.4 78.6H846.4L846.4 79.2H847.4L847.4 75.8H848.4L848.4 91.9H849.4L849.4 115.3H850.4L850.4 123.3H851.4L851.4 150.4H852.4L852.4 165.0H853.4L853.4 175.1H854.4L854.4 178.5H855.4L855.4 179.0H856.4L856.4 176.5H857.4L857.4 177.7H858.4L858.4 182.0H859.4L859.4 180.0H860.4L860.4 179.7H861.4L861.4 178.5H862.4L862.4 179.1H863.4L863.4 181.6H864.4L864.4 177.8H865.4L865.4 179.7H866.4L866.4 180.1H867.4L867.4 181.7H868.4L868.4 180.2H869.4L869.4 179.3H870.4L870.4 181.6H871.4L871.4 181.8H872.4L872.4 179.1H873.4L873.4 180.9H874.4L874.4 184.0H875.4L875.4 177.7H876.4L876.4 178.9H877.4L877.4 180.1H878.4L878.4 179.6H879.4L879.4 176.9H880.4L880.4 181.3H881.4L881.4 180.4H882.4L882.4 182.2H883.4L883.4 180.4H884.4L884.4 179.7H885.4L885.4 179.8H886.4L886.4 178.8H887.4L887.4 180.6H888.4L888.4 181.2H889.4L889.4 181.0H890.4L890.4 182.3H891.4L891.4 193.3H892.4L892.4 177.9H893.4L893.4 179.6H894.4L894.4 176.8H895.4L895.4 144.3H896.4L896.4 144.3H897.4L897.4 178.5H898.4L898.4 179.4H899.4L899.4 180.6H900.4L900.4 179.0H901.4L901.4 180.2H902.4L902.4 177.4H903.4L903.4 177.7H904.4L904.4 179.6H905.4L905.4 190.4H906.4L906.4 177.8H907.4L907.4 177.8H908.4L908.4 178.3H909.4L909.4 177.5H910.4L910.4 176.5H911.4L911.4 178.3H912.4L912.4 176.0H913.4L913.4 178.2H914.4L914.4 175.8H915.4L915.4 179.4H916.4L916.4 174.6H917.4L917.4 177.2H918.4L918.4 177.3H919.4L919.4 179.7H920.4L920.4 181.0H921.4L921.4 176.9H922.4L922.4 178.7H923.4L923.4 180.4H924.4L924.4 175.2H925.4L925.4 175.7H926.4L926.4 176.8H927.4L927.4 177.1H928.4L928.4 174.2H929.4L929.4 183.2H930.4L930.4 176.5H931.4L931.4 175.3H932.4L932.4 174.8H933.4L933.4 175.4H934.4L934.4 181.8H935.4L935.4 180.7H936.4L936.4 176.3H937.4L937.4 177.8H938.4L938.4 175.9H939.4L939.4 174.9H940.4L940.4 172.3H941.4L941.4 172.4H942.4L942.4 169.6H943.4L943.4 169.2H944.4L944.4 166.9H945.4L945.4 165.8H946.4L946.4 164.1H947.4L947.4 173.7H948.4L948.4 172.0H949.4L949.4 180.0H950.4L950.4 207.4H951.4L951.4 203.7H952.4L952.4 207.5H953.4L953.4 211.2H954.4L954.4 211.9H955.4L955.4 211.3H956.4L956.4 213.0H957.4L957.4 214.4H958.4L958.4 215.8H959.4L959.4 215.3H960.4L960.4 216.0H961.4L961.4 214.8H962.4L962.4 214.7H963.4L963.4 216.6H964.4L964.4 218.5H965.4L965.4 217.0H966.4L966.4 212.6H967.4L967.4 215.6H968.4L968.4 217.3H969.4L969.4 216.8H970.4L970.4 215.4H971.4L971.4 168.5H972.4L972.4 168.5H973.4L973.4 216.1H974.4L974.4 215.1H975.4L975.4 216.6H976.4L976.4 230.6H977.4L977.4 218.7H978.4L978.4 211.5H979.4L979.4 212.2H980.4L980.4 211.2H981.4L981.4 212.5H982.4L982.4 211.4H983.4L983.4 211.5H984.4L984.4 214.8H985.4L985.4 213.3H986.4L986.4 212.0H987.4L987.4 211.0H988.4L988.4 212.3H989.4L989.4 214.8H990.4L990.4 212.2H991.4L991.4 214.6H992.4L992.4 213.1H993.4L993.4 213.9H994.4L994.4 215.0H995.4L995.4 214.1H996.4L996.4 214.1H997.4L997.4 212.5H998.4L998.4 212.8H999.4L999.4 212.7H1000.4L1000.4 215.5H1001.4L1001.4 224.7H1002.4L1002.4 212.8H1003.4L1003.4 209.6H1004.4L1004.4 214.8H1005.4L1005.4 213.7H1006.4L1006.4 212.9H1007.4L1007.4 211.7H1008.4L1008.4 210.0H1009.4L1009.4 211.9H1010.4L1010.4 208.9H1011.4L1011.4 213.2H1012.4L1012.4 206.6H1013.4L1013.4 207.7H1014.4L1014.4 199.5H1015.4L1015.4 175.2H1016.4L1016.4 140.1H1017.4L1017.4 108.9H1018.4L1018.4 88.9H1019.4L1019.4 78.9H1020.4L1020.4 74.8H1021.4L1021.4 71.4H1022.4L1022.4 75.9H1023.4L1023.4 79.3H1024.4L1024.4 78.9H1025.4L1025.4 79.3H1026.4L1026.4 76.9H1027.4L1027.4 85.6H1028.4L1028.4 86.9H1029.4L1029.4 81.1H1030.4L1030.4 80.8H1031.4L1031.4 81.4H1032.4L1032.4 81.0H1033.4L1033.4 83.3H1034.4L1034.4 81.5H1035.4L1035.4 81.9H1036.4L1036.4 83.6H1037.4L1037.4 84.0H1038.4L1038.4 84.4H1039.4L1039.4 82.7H1040.4L1040.4 87.3H1041.4L1041.4 83.7H1042.4L1042.4 85.6H1043.4L1043.4 88.1H1044.4L1044.4 85.4H1045.4L1045.4 87.0H1046.4L1046.4 91.1H1047.4L1047.4 89.8H1048.4L1048.4 88.3H1049.4L1049.4 88.7H1050.4L1050.4 91.9H1051.4L1051.4 88.6H1052.4L1052.4 87.4H1053.4L1053.4 86.4H1054.4L1054.4 85.7H1055.4L1055.4 84.8H1056.4L1056.4 84.4H1057.4L1057.4 86.2H1058.4L1058.4 83.9H1059.4L1059.4 87.4H1060.4L1060.4 89.0H1061.4L1061.4 86.7H1062.4L1062.4 84.9H1063.4L1063.4 86.9H1064.4L1064.4 88.3H1065.4L1065.4 88.7H1066.4L1066.4 87.2H1067.4L1067.4 86.7H1068.4L1068.4 87.1H1069.4L1069.4 90.2H1070.4L1070.4 24.2H1071.4L1071.4 24.2H1072.4L1072.4 88.8H1073.4L1073.4 87.6H1074.4L1074.4 86.8H1075.4L1075.4 86.6H1076.4L1076.4 89.0H1077.4L1077.4 89.2H1078.4L1078.4 87.5H1079.4L1079.4 92.2H1080.4L1080.4 87.4H1081.4L1081.4 98.9H1082.4L1082.4 88.0H1083.4L1083.4 85.9H1084.4L1084.4 90.1H1085.4L1085.4 87.0H1086.4L1086.4 89.5H1087.4L1087.4 87.8H1088.4L1088.4 90.4H1089.4L1089.4 86.4H1090.4L1090.4 86.5H1091.4L1091.4 87.0H1092.4L1092.4 83.6H1093.4L1093.4 90.3H1094.4L1094.4 80.4H1095.4L1095.4 79.4H1096.4L1096.4 76.1H1097.4L1097.4 78.6H1098.4L1098.4 94.1H1099.4L1099.4 109.7H1100.4L1100.4 137.5H1101.4L1101.4 168.7H1102.4L1102.4 201.1H1103.4L1103.4 236.0H1104.4L1104.4 224.5H1105.4L1105.4 223.5H1106.4L1106.4 227.5H1107.4L1107.4 196.4H1108.4L1108.4 196.4H1109.4L1109.4 229.5H1110.4L1110.4 226.7H1111.4L1111.4 230.4H1112.4L1112.4 229.5H1113.4L1113.4 229.7H1114.4L1114.4 232.9H1115.4L1115.4 234.2H1116.4L1116.4 235.9H1117.4L1117.4 233.6H1118.4L1118.4 238.8H1119.4L1119.4 235.4H1120.4L1120.4 234.3H1121.4L1121.4 233.1H1122.4L1122.4 231.4H1123.4L1123.4 235.2H1124.4L1124.4 231.9H1125.4L1125.4 237.9H1126.4L1126.4 236.7H1127.4L1127.4 236.2H1128.4L1128.4 236.7H1129.4L1129.4 239.1H1130.4L1130.4 249.9H1131.4L1131.4 241.9H1132.4L1132.4 243.4H1133.4L1133.4 241.7H1134.4L1134.4 246.0H1135.4L1135.4 244.6H1136.4L1136.4 244.7H1137.4L1137.4 247.5H1138.4L1138.4 248.8H1139.4L1139.4 249.3H1140.4L1140.4 248.7H1141.4L1141.4 246.7H1142.4L1142.4 247.8H1143.4L1143.4 251.5H1144.4L1144.4 247.9H1145.4L1145.4 251.9H1146.4L1146.4 222.0H1147.4L1147.4 222.0H1148.4L1148.4 252.1H1149.4L1149.4 254.4H1150.4L1150.4 258.8H1151.4L1151.4 260.5H1152.4L1152.4 256.5H1153.4L1153.4 257.8H1154.4L1154.4 257.4H1155.4L1155.4 258.2H1156.4L1156.4 263.3H1157.4L1157.4 262.3H1158.4L1158.4 265.7H1159.4L1159.4 272.5H1160.4L1160.4 266.7H1161.4L1161.4 265.5H1162.4L1162.4 272.1H1163.4L1163.4 271.6H1164.4L1164.4 274.2H1165.4L1165.4 273.8H1166.4L1166.4 274.5H1167.4V312z" fill="#3fb4f4" stroke="none"/><path d="M0.4 312L0.4 219.8H1.4L1.4 194.7H2.4L2.4 188.5H3.4L3.4 182.3H4.4L4.4 182.8H5.4L5.4 183.2H6.4L6.4 196.3H7.4L7.4 177.6H8.4L8.4 183.4H9.4L9.4 176.9H10.4L10.4 179.7H11.4L11.4 176.6H12.4L12.4 177.9H13.4L13.4 175.7H14.4L14.4 186.9H15.4L15.4 175.3H16.4L16.4 176.1H17.4L17.4 176.1H18.4L18.4 176.3H19.4L19.4 173.8H20.4L20.4 172.1H21.4L21.4 175.0H22.4L22.4 167.2H23.4L23.4 173.8H24.4L24.4 167.1H25.4L25.4 165.4H26.4L26.4 170.9H27.4L27.4 177.2H28.4L28.4 184.5H29.4L29.4 181.6H30.4L30.4 182.5H31.4L31.4 185.2H32.4L32.4 184.4H33.4L33.4 183.4H34.4L34.4 182.7H35.4L35.4 182.5H36.4L36.4 186.9H37.4L37.4 180.4H38.4L38.4 181.9H39.4L39.4 184.4H40.4L40.4 184.7H41.4L41.4 198.3H42.4L42.4 182.4H43.4L43.4 183.8H44.4L44.4 181.9H45.4L45.4 180.9H46.4L46.4 182.3H47.4L47.4 174.2H48.4L48.4 177.3H49.4L49.4 168.4H50.4L50.4 173.6H51.4L51.4 180.2H52.4L52.4 184.9H53.4L53.4 194.4H54.4L54.4 207.6H55.4L55.4 198.8H56.4L56.4 200.0H57.4L57.4 201.4H58.4L58.4 202.3H59.4L59.4 199.2H60.4L60.4 202.7H61.4L61.4 204.2H62.4L62.4 202.0H63.4L63.4 202.0H64.4L64.4 204.0H65.4L65.4 201.3H66.4L66.4 202.6H67.4L67.4 200.8H68.4L68.4 205.1H69.4L69.4 201.1H70.4L70.4 209.1H71.4L71.4 199.7H72.4L72.4 202.7H73.4L73.4 204.1H74.4L74.4 203.9H75.4L75.4 219.5H76.4L76.4 204.2H77.4L77.4 205.1H78.4L78.4 201.7H79.4L79.4 206.4H80.4L80.4 204.7H81.4L81.4 207.3H82.4L82.4 205.1H83.4L83.4 203.9H84.4L84.4 205.9H85.4L85.4 207.0H86.4L86.4 203.6H87.4L87.4 203.7H88.4L88.4 206.8H89.4L89.4 205.3H90.4L90.4 206.3H91.4L91.4 213.5H92.4L92.4 207.7H93.4L93.4 205.9H94.4L94.4 206.9H95.4L95.4 204.7H96.4L96.4 206.4H97.4L97.4 204.6H98.4L98.4 204.6H99.4L99.4 153.6H100.4L100.4 153.6H101.4L101.4 207.4H102.4L102.4 204.5H103.4L103.4 204.7H104.4L104.4 203.4H105.4L105.4 204.6H106.4L106.4 205.1H107.4L107.4 204.0H108.4L108.4 203.9H109.4L109.4 206.1H110.4L110.4 205.6H111.4L111.4 202.3H112.4L112.4 202.9H113.4L113.4 202.5H114.4L114.4 205.2H115.4L115.4 204.2H116.4L116.4 201.1H117.4L117.4 201.9H118.4L118.4 200.1H119.4L119.4 197.2H120.4L120.4 203.7H121.4L121.4 196.3H122.4L122.4 196.0H123.4L123.4 194.9H124.4L124.4 189.9H125.4L125.4 191.5H126.4L126.4 195.2H127.4L127.4 198.4H128.4L128.4 196.6H129.4L129.4 197.9H130.4L130.4 201.4H131.4L131.4 207.6H132.4L132.4 205.9H133.4L133.4 201.9H134.4L134.4 201.2H135.4L135.4 204.8H136.4L136.4 157.3H137.4L137.4 157.3H138.4L138.4 206.0H139.4L139.4 204.6H140.4L140.4 203.3H141.4L141.4 208.0H142.4L142.4 206.4H143.4L143.4 205.7H144.4L144.4 202.4H145.4L145.4 197.7H146.4L146.4 172.6H147.4L147.4 140.6H148.4L148.4 111.2H149.4L149.4 89.0H150.4L150.4 76.3H151.4L151.4 78.9H152.4L152.4 83.8H153.4L153.4 81.2H154.4L154.4 98.4H155.4L155.4 84.8H156.4L156.4 89.1H157.4L157.4 90.4H158.4L158.4 87.6H159.4L159.4 87.2H160.4L160.4 89.4H161.4L161.4 87.5H162.4L162.4 102.8H163.4L163.4 90.1H164.4L164.4 88.9H165.4L165.4 91.5H166.4L166.4 94.2H167.4L167.4 91.9H168.4L168.4 92.7H169.4L169.4 90.4H170.4L170.4 91.8H171.4L171.4 94.3H172.4L172.4 95.7H173.4L173.4 95.7H174.4L174.4 94.1H175.4L175.4 16.1H176.4L176.4 16.1H177.4L177.4 95.3H178.4L178.4 95.0H179.4L179.4 95.4H180.4L180.4 95.5H181.4L181.4 95.8H182.4L182.4 99.0H183.4L183.4 95.8H184.4L184.4 104.1H185.4L185.4 95.4H186.4L186.4 95.3H187.4L187.4 95.8H188.4L188.4 96.7H189.4L189.4 95.9H190.4L190.4 97.2H191.4L191.4 96.6H192.4L192.4 94.3H193.4L193.4 95.2H194.4L194.4 111.3H195.4L195.4 94.5H196.4L196.4 92.1H197.4L197.4 93.2H198.4L198.4 93.3H199.4L199.4 93.6H200.4L200.4 92.0H201.4L201.4 92.8H202.4L202.4 94.0H203.4L203.4 93.0H204.4L204.4 94.6H205.4L205.4 94.0H206.4L206.4 93.1H207.4L207.4 91.7H208.4L208.4 88.5H209.4L209.4 90.4H210.4L210.4 91.4H211.4L211.4 90.7H212.4L212.4 89.3H213.4L213.4 90.8H214.4L214.4 86.7H215.4L215.4 90.5H216.4L216.4 99.4H217.4L217.4 87.4H218.4L218.4 91.5H219.4L219.4 84.3H220.4L220.4 85.1H221.4L221.4 83.8H222.4L222.4 84.2H223.4L223.4 78.4H224.4L224.4 77.4H225.4L225.4 82.7H226.4L226.4 93.2H227.4L227.4 122.1H228.4L228.4 149.6H229.4L229.4 178.8H230.4L230.4 194.5H231.4L231.4 195.5H232.4L232.4 199.7H233.4L233.4 194.8H234.4L234.4 210.0H235.4L235.4 195.4H236.4L236.4 199.0H237.4L237.4 197.0H238.4L238.4 195.7H239.4L239.4 200.6H240.4L240.4 199.2H241.4L241.4 200.8H242.4L242.4 196.2H243.4L243.4 197.3H244.4L244.4 199.1H245.4L245.4 199.3H246.4L246.4 196.8H247.4L247.4 198.8H248.4L248.4 201.5H249.4L249.4 201.0H250.4L250.4 198.3H251.4L251.4 208.1H252.4L252.4 199.4H253.4L253.4 200.9H254.4L254.4 202.1H255.4L255.4 202.6H256.4L256.4 204.1H257.4L257.4 203.7H258.4L258.4 200.3H259.4L259.4 202.9H260.4L260.4 201.1H261.4L261.4 202.6H262.4L262.4 200.6H263.4L263.4 197.6H264.4L264.4 199.8H265.4L265.4 198.8H266.4L266.4 199.6H267.4L267.4 199.5H268.4L268.4 198.8H269.4L269.4 201.0H270.4L270.4 215.0H271.4L271.4 201.9H272.4L272.4 143.2H273.4L273.4 143.2H274.4L274.4 198.8H275.4L275.4 200.8H276.4L276.4 198.0H277.4L277.4 199.3H278.4L278.4 195.6H279.4L279.4 199.0H280.4L280.4 197.6H281.4L281.4 197.6H282.4L282.4 196.5H283.4L283.4 198.9H284.4L284.4 197.7H285.4L285.4 197.2H286.4L286.4 197.6H287.4L287.4 200.8H288.4L288.4 203.4H289.4L289.4 197.4H290.4L290.4 192.3H291.4L291.4 196.5H292.4L292.4 195.1H293.4L293.4 193.5H294.4L294.4 191.5H295.4L295.4 191.5H296.4L296.4 201.2H297.4L297.4 186.4H298.4L298.4 171.4H299.4L299.4 168.0H300.4L300.4 169.9H301.4L301.4 172.9H302.4L302.4 174.5H303.4L303.4 177.3H304.4L304.4 178.0H305.4L305.4 176.1H306.4L306.4 177.2H307.4L307.4 179.7H308.4L308.4 178.1H309.4L309.4 179.8H310.4L310.4 175.9H311.4L311.4 176.0H312.4L312.4 181.4H313.4L313.4 176.6H314.4L314.4 181.9H315.4L315.4 181.5H316.4L316.4 180.7H317.4L317.4 181.5H318.4L318.4 179.2H319.4L319.4 182.5H320.4L320.4 179.2H321.4L321.4 179.7H322.4L322.4 178.2H323.4L323.4 190.1H324.4L324.4 173.5H325.4L325.4 168.4H326.4L326.4 179.1H327.4L327.4 178.9H328.4L328.4 180.6H329.4L329.4 183.1H330.4L330.4 182.9H331.4L331.4 186.3H332.4L332.4 184.4H333.4L333.4 190.3H334.4L334.4 197.1H335.4L335.4 186.1H336.4L336.4 186.4H337.4L337.4 187.8H338.4L338.4 183.5H339.4L339.4 201.1H340.4L340.4 187.8H341.4L341.4 189.1H342.4L342.4 185.2H343.4L343.4 187.1H344.4L344.4 189.4H345.4L345.4 183.3H346.4L346.4 188.1H347.4L347.4 185.2H348.4L348.4 186.4H349.4L349.4 150.0H350.4L350.4 150.0H351.4L351.4 188.7H352.4L352.4 188.7H353.4L353.4 187.9H354.4L354.4 189.4H355.4L355.4 188.6H356.4L356.4 187.2H357.4L357.4 187.8H358.4L358.4 189.8H359.4L359.4 187.7H360.4L360.4 189.0H361.4L361.4 187.7H362.4L362.4 188.3H363.4L363.4 188.2H364.4L364.4 187.0H365.4L365.4 187.5H366.4L366.4 191.5H367.4L367.4 189.9H368.4L368.4 188.9H369.4L369.4 190.6H370.4L370.4 188.8H371.4L371.4 188.9H372.4L372.4 187.9H373.4L373.4 187.0H374.4L374.4 185.2H375.4L375.4 188.4H376.4L376.4 189.8H377.4L377.4 188.2H378.4L378.4 187.8H379.4L379.4 189.5H380.4L380.4 187.1H381.4L381.4 184.5H382.4L382.4 188.7H383.4L383.4 187.2H384.4L384.4 186.7H385.4L385.4 186.6H386.4L386.4 187.1H387.4L387.4 188.0H388.4L388.4 188.8H389.4L389.4 185.1H390.4L390.4 187.6H391.4L391.4 180.3H392.4L392.4 172.6H393.4L393.4 168.0H394.4L394.4 128.9H395.4L395.4 103.3H396.4L396.4 87.2H397.4L397.4 82.4H398.4L398.4 83.5H399.4L399.4 85.5H400.4L400.4 83.8H401.4L401.4 91.5H402.4L402.4 93.9H403.4L403.4 88.1H404.4L404.4 86.2H405.4L405.4 89.5H406.4L406.4 85.1H407.4L407.4 87.9H408.4L408.4 91.0H409.4L409.4 88.2H410.4L410.4 91.2H411.4L411.4 89.4H412.4L412.4 91.8H413.4L413.4 91.3H414.4L414.4 89.3H415.4L415.4 89.4H416.4L416.4 91.5H417.4L417.4 92.4H418.4L418.4 92.1H419.4L419.4 99.6H420.4L420.4 92.9H421.4L421.4 92.7H422.4L422.4 92.7H423.4L423.4 93.2H424.4L424.4 92.5H425.4L425.4 95.4H426.4L426.4 90.8H427.4L427.4 94.6H428.4L428.4 94.5H429.4L429.4 92.3H430.4L430.4 94.2H431.4L431.4 97.4H432.4L432.4 99.9H433.4L433.4 95.9H434.4L434.4 95.5H435.4L435.4 95.2H436.4L436.4 94.1H437.4L437.4 95.8H438.4L438.4 94.4H439.4L439.4 96.5H440.4L440.4 96.2H441.4L441.4 95.5H442.4L442.4 97.6H443.4L443.4 95.7H444.4L444.4 98.4H445.4L445.4 101.8H446.4L446.4 95.8H447.4L447.4 93.7H448.4L448.4 14.1H449.4L449.4 14.1H450.4L450.4 95.1H451.4L451.4 94.8H452.4L452.4 93.7H453.4L453.4 94.9H454.4L454.4 94.1H455.4L455.4 93.5H456.4L456.4 98.1H457.4L457.4 93.2H458.4L458.4 90.4H459.4L459.4 91.6H460.4L460.4 92.4H461.4L461.4 90.4H462.4L462.4 91.0H463.4L463.4 92.1H464.4L464.4 91.8H465.4L465.4 90.0H466.4L466.4 102.0H467.4L467.4 89.4H468.4L468.4 84.9H469.4L469.4 85.0H470.4L470.4 81.9H471.4L471.4 83.7H472.4L472.4 81.7H473.4L473.4 78.1H474.4L474.4 83.7H475.4L475.4 96.4H476.4L476.4 126.6H477.4L477.4 151.8H478.4L478.4 176.7H479.4L479.4 182.5H480.4L480.4 184.6H481.4L481.4 183.2H482.4L482.4 186.4H483.4L483.4 189.2H484.4L484.4 186.1H485.4L485.4 162.3H486.4L486.4 162.3H487.4L487.4 185.0H488.4L488.4 186.4H489.4L489.4 186.2H490.4L490.4 188.2H491.4L491.4 182.8H492.4L492.4 181.8H493.4L493.4 182.1H494.4L494.4 180.6H495.4L495.4 180.2H496.4L496.4 175.5H497.4L497.4 173.8H498.4L498.4 180.0H499.4L499.4 185.3H500.4L500.4 189.0H501.4L501.4 201.6H502.4L502.4 194.1H503.4L503.4 195.5H504.4L504.4 195.6H505.4L505.4 196.9H506.4L506.4 196.7H507.4L507.4 197.0H508.4L508.4 200.6H509.4L509.4 198.0H510.4L510.4 200.8H511.4L511.4 199.2H512.4L512.4 200.8H513.4L513.4 200.5H514.4L514.4 199.2H515.4L515.4 198.8H516.4L516.4 199.5H517.4L517.4 201.7H518.4L518.4 199.9H519.4L519.4 201.3H520.4L520.4 213.4H521.4L521.4 199.7H522.4L522.4 202.0H523.4L523.4 200.4H524.4L524.4 135.9H525.4L525.4 135.9H526.4L526.4 218.8H527.4L527.4 202.9H528.4L528.4 201.5H529.4L529.4 201.5H530.4L530.4 201.8H531.4L531.4 203.4H532.4L532.4 201.2H533.4L533.4 201.5H534.4L534.4 202.6H535.4L535.4 203.7H536.4L536.4 201.0H537.4L537.4 211.1H538.4L538.4 202.7H539.4L539.4 200.7H540.4L540.4 200.4H541.4L541.4 202.0H542.4L542.4 203.2H543.4L543.4 215.4H544.4L544.4 200.1H545.4L545.4 201.3H546.4L546.4 201.1H547.4L547.4 200.4H548.4L548.4 200.9H549.4L549.4 204.2H550.4L550.4 211.0H551.4L551.4 201.2H552.4L552.4 201.7H553.4L553.4 202.9H554.4L554.4 203.4H555.4L555.4 201.0H556.4L556.4 202.4H557.4L557.4 200.2H558.4L558.4 200.8H559.4L559.4 199.6H560.4L560.4 200.5H561.4L561.4 201.0H562.4L562.4 201.9H563.4L563.4 197.8H564.4L564.4 196.0H565.4L565.4 195.6H566.4L566.4 196.7H567.4L567.4 200.0H568.4L568.4 197.7H569.4L569.4 194.3H570.4L570.4 187.4H571.4L571.4 184.0H572.4L572.4 181.7H573.4L573.4 178.2H574.4L574.4 177.7H575.4L575.4 179.2H576.4L576.4 183.0H577.4L577.4 183.5H578.4L578.4 187.4H579.4L579.4 181.5H580.4L580.4 186.4H581.4L581.4 186.1H582.4L582.4 187.1H583.4L583.4 188.6H584.4L584.4 186.7H585.4L585.4 188.1H586.4L586.4 187.7H587.4L587.4 185.1H588.4L588.4 186.9H589.4L589.4 183.9H590.4L590.4 185.7H591.4L591.4 188.1H592.4L592.4 188.1H593.4L593.4 188.5H594.4L594.4 186.3H595.4L595.4 181.2H596.4L596.4 170.8H597.4L597.4 170.2H598.4L598.4 167.0H599.4L599.4 175.4H600.4L600.4 175.9H601.4L601.4 181.7H602.4L602.4 178.0H603.4L603.4 182.4H604.4L604.4 178.8H605.4L605.4 180.2H606.4L606.4 184.2H607.4L607.4 180.2H608.4L608.4 182.1H609.4L609.4 181.4H610.4L610.4 183.7H611.4L611.4 181.4H612.4L612.4 182.0H613.4L613.4 182.2H614.4L614.4 183.3H615.4L615.4 184.9H616.4L616.4 183.1H617.4L617.4 182.7H618.4L618.4 181.7H619.4L619.4 182.0H620.4L620.4 182.1H621.4L621.4 180.5H622.4L622.4 185.3H623.4L623.4 73.7H624.4L624.4 73.7H625.4L625.4 184.6H626.4L626.4 182.5H627.4L627.4 182.4H628.4L628.4 180.9H629.4L629.4 184.2H630.4L630.4 181.8H631.4L631.4 181.8H632.4L632.4 182.1H633.4L633.4 184.9H634.4L634.4 183.4H635.4L635.4 190.1H636.4L636.4 183.1H637.4L637.4 180.9H638.4L638.4 182.5H639.4L639.4 190.5H640.4L640.4 180.5H641.4L641.4 180.6H642.4L642.4 178.8H643.4L643.4 177.3H644.4L644.4 181.8H645.4L645.4 178.6H646.4L646.4 177.2H647.4L647.4 173.9H648.4L648.4 170.4H649.4L649.4 172.2H650.4L650.4 180.3H651.4L651.4 193.3H652.4L652.4 181.1H653.4L653.4 178.1H654.4L654.4 182.3H655.4L655.4 183.3H656.4L656.4 179.3H657.4L657.4 181.2H658.4L658.4 183.5H659.4L659.4 184.4H660.4L660.4 181.6H661.4L661.4 179.9H662.4L662.4 178.7H663.4L663.4 179.6H664.4L664.4 192.1H665.4L665.4 178.5H666.4L666.4 177.1H667.4L667.4 172.7H668.4L668.4 173.9H669.4L669.4 169.0H670.4L670.4 167.4H671.4L671.4 167.5H672.4L672.4 180.9H673.4L673.4 186.9H674.4L674.4 193.6H675.4L675.4 213.1H676.4L676.4 203.9H677.4L677.4 205.2H678.4L678.4 206.7H679.4L679.4 205.0H680.4L680.4 208.0H681.4L681.4 217.4H682.4L682.4 209.9H683.4L683.4 206.7H684.4L684.4 209.6H685.4L685.4 210.7H686.4L686.4 209.3H687.4L687.4 209.5H688.4L688.4 209.3H689.4L689.4 211.3H690.4L690.4 209.5H691.4L691.4 210.8H692.4L692.4 210.5H693.4L693.4 210.2H694.4L694.4 212.4H695.4L695.4 208.3H696.4L696.4 208.6H697.4L697.4 217.5H698.4L698.4 196.7H699.4L699.4 196.7H700.4L700.4 211.9H701.4L701.4 211.3H702.4L702.4 212.2H703.4L703.4 213.1H704.4L704.4 212.3H705.4L705.4 211.2H706.4L706.4 219.9H707.4L707.4 221.1H708.4L708.4 212.0H709.4L709.4 208.9H710.4L710.4 208.6H711.4L711.4 212.4H712.4L712.4 211.9H713.4L713.4 210.3H714.4L714.4 209.5H715.4L715.4 212.2H716.4L716.4 210.7H717.4L717.4 210.1H718.4L718.4 222.4H719.4L719.4 211.3H720.4L720.4 158.1H721.4L721.4 158.1H722.4L722.4 209.8H723.4L723.4 210.7H724.4L724.4 221.3H725.4L725.4 209.9H726.4L726.4 207.9H727.4L727.4 209.9H728.4L728.4 210.5H729.4L729.4 205.8H730.4L730.4 207.7H731.4L731.4 212.1H732.4L732.4 205.8H733.4L733.4 220.0H734.4L734.4 204.6H735.4L735.4 204.4H736.4L736.4 202.2H737.4L737.4 203.2H738.4L738.4 206.3H739.4L739.4 201.3H740.4L740.4 201.7H741.4L741.4 200.5H742.4L742.4 195.2H743.4L743.4 196.7H744.4L744.4 194.8H745.4L745.4 189.3H746.4L746.4 187.4H747.4L747.4 188.1H748.4L748.4 184.1H749.4L749.4 189.6H750.4L750.4 190.3H751.4L751.4 190.4H752.4L752.4 191.8H753.4L753.4 191.7H754.4L754.4 191.5H755.4L755.4 193.2H756.4L756.4 193.7H757.4L757.4 166.6H758.4L758.4 166.6H759.4L759.4 195.1H760.4L760.4 196.9H761.4L761.4 196.1H762.4L762.4 197.6H763.4L763.4 196.8H764.4L764.4 193.2H765.4L765.4 188.2H766.4L766.4 157.7H767.4L767.4 123.4H768.4L768.4 97.2H769.4L769.4 84.8H770.4L770.4 80.0H771.4L771.4 74.8H772.4L772.4 78.8H773.4L773.4 82.9H774.4L774.4 83.4H775.4L775.4 81.7H776.4L776.4 83.4H777.4L777.4 85.4H778.4L778.4 83.6H779.4L779.4 98.5H780.4L780.4 85.6H781.4L781.4 82.3H782.4L782.4 86.0H783.4L783.4 89.5H784.4L784.4 84.6H785.4L785.4 86.1H786.4L786.4 94.8H787.4L787.4 85.3H788.4L788.4 88.0H789.4L789.4 97.5H790.4L790.4 87.3H791.4L791.4 88.7H792.4L792.4 90.0H793.4L793.4 88.7H794.4L794.4 89.8H795.4L795.4 87.6H796.4L796.4 43.9H797.4L797.4 43.9H798.4L798.4 92.9H799.4L799.4 89.9H800.4L800.4 90.1H801.4L801.4 89.2H802.4L802.4 92.4H803.4L803.4 91.2H804.4L804.4 93.0H805.4L805.4 90.8H806.4L806.4 86.2H807.4L807.4 98.3H808.4L808.4 89.1H809.4L809.4 90.6H810.4L810.4 90.4H811.4L811.4 95.9H812.4L812.4 91.9H813.4L813.4 93.1H814.4L814.4 89.4H815.4L815.4 90.0H816.4L816.4 90.5H817.4L817.4 94.0H818.4L818.4 89.9H819.4L819.4 91.6H820.4L820.4 89.6H821.4L821.4 93.1H822.4L822.4 90.4H823.4L823.4 90.4H824.4L824.4 89.5H825.4L825.4 89.2H826.4L826.4 91.3H827.4L827.4 92.2H828.4L828.4 90.5H829.4L829.4 89.1H830.4L830.4 93.2H831.4L831.4 89.7H832.4L832.4 91.1H833.4L833.4 85.2H834.4L834.4 88.9H835.4L835.4 87.0H836.4L836.4 84.5H837.4L837.4 85.1H838.4L838.4 86.3H839.4L839.4 81.9H840.4L840.4 82.6H841.4L841.4 84.1H842.4L842.4 82.1H843.4L843.4 83.6H844.4L844.4 84.3H845.4L845.4 78.8H846.4L846.4 78.5H847.4L847.4 74.9H848.4L848.4 92.7H849.4L849.4 113.3H850.4L850.4 124.1H851.4L851.4 152.0H852.4L852.4 165.1H853.4L853.4 174.8H854.4L854.4 176.2H855.4L855.4 173.6H856.4L856.4 173.7H857.4L857.4 172.7H858.4L858.4 177.6H859.4L859.4 176.8H860.4L860.4 174.9H861.4L861.4 174.7H862.4L862.4 173.6H863.4L863.4 179.6H864.4L864.4 174.3H865.4L865.4 176.3H866.4L866.4 174.7H867.4L867.4 177.1H868.4L868.4 177.8H869.4L869.4 175.7H870.4L870.4 176.8H871.4L871.4 179.0H872.4L872.4 175.8H873.4L873.4 175.5H874.4L874.4 177.6H875.4L875.4 176.1H876.4L876.4 174.2H877.4L877.4 176.3H878.4L878.4 176.7H879.4L879.4 173.9H880.4L880.4 175.5H881.4L881.4 176.7H882.4L882.4 179.4H883.4L883.4 177.4H884.4L884.4 175.4H885.4L885.4 176.8H886.4L886.4 173.7H887.4L887.4 176.9H888.4L888.4 178.2H889.4L889.4 178.3H890.4L890.4 177.4H891.4L891.4 190.9H892.4L892.4 173.9H893.4L893.4 176.5H894.4L894.4 174.7H895.4L895.4 144.3H896.4L896.4 144.3H897.4L897.4 175.7H898.4L898.4 176.4H899.4L899.4 176.1H900.4L900.4 175.9H901.4L901.4 177.3H902.4L902.4 172.7H903.4L903.4 175.8H904.4L904.4 177.8H905.4L905.4 187.7H906.4L906.4 174.5H907.4L907.4 174.9H908.4L908.4 173.8H909.4L909.4 175.3H910.4L910.4 171.3H911.4L911.4 175.7H912.4L912.4 172.8H913.4L913.4 175.3H914.4L914.4 173.1H915.4L915.4 176.3H916.4L916.4 170.3H917.4L917.4 173.0H918.4L918.4 173.0H919.4L919.4 174.8H920.4L920.4 177.3H921.4L921.4 173.5H922.4L922.4 173.3H923.4L923.4 176.3H924.4L924.4 171.2H925.4L925.4 173.8H926.4L926.4 173.7H927.4L927.4 174.1H928.4L928.4 170.0H929.4L929.4 179.5H930.4L930.4 172.2H931.4L931.4 171.4H932.4L932.4 172.3H933.4L933.4 171.7H934.4L934.4 177.9H935.4L935.4 178.8H936.4L936.4 172.0H937.4L937.4 172.4H938.4L938.4 173.0H939.4L939.4 171.8H940.4L940.4 169.6H941.4L941.4 167.7H942.4L942.4 165.9H943.4L943.4 165.1H944.4L944.4 163.6H945.4L945.4 166.7H946.4L946.4 162.9H947.4L947.4 172.0H948.4L948.4 169.9H949.4L949.4 180.9H950.4L950.4 206.9H951.4L951.4 201.5H952.4L952.4 210.7H953.4L953.4 210.6H954.4L954.4 211.0H955.4L955.4 212.1H956.4L956.4 212.2H957.4L957.4 213.2H958.4L958.4 214.2H959.4L959.4 215.2H960.4L960.4 214.9H961.4L961.4 213.1H962.4L962.4 214.5H963.4L963.4 216.4H964.4L964.4 217.9H965.4L965.4 217.4H966.4L966.4 214.4H967.4L967.4 215.7H968.4L968.4 216.8H969.4L969.4 215.7H970.4L970.4 215.5H971.4L971.4 143.2H972.4L972.4 143.2H973.4L973.4 215.9H974.4L974.4 214.3H975.4L975.4 217.1H976.4L976.4 231.3H977.4L977.4 218.7H978.4L978.4 214.9H979.4L979.4 219.0H980.4L980.4 216.9H981.4L981.4 218.4H982.4L982.4 215.1H983.4L983.4 214.7H984.4L984.4 217.1H985.4L985.4 217.3H986.4L986.4 215.8H987.4L987.4 216.0H988.4L988.4 218.2H989.4L989.4 219.0H990.4L990.4 217.0H991.4L991.4 219.1H992.4L992.4 217.7H993.4L993.4 218.6H994.4L994.4 218.1H995.4L995.4 218.0H996.4L996.4 218.6H997.4L997.4 217.0H998.4L998.4 217.4H999.4L999.4 216.2H1000.4L1000.4 219.9H1001.4L1001.4 228.6H1002.4L1002.4 217.9H1003.4L1003.4 214.1H1004.4L1004.4 219.1H1005.4L1005.4 214.8H1006.4L1006.4 217.8H1007.4L1007.4 216.3H1008.4L1008.4 214.4H1009.4L1009.4 217.2H1010.4L1010.4 213.4H1011.4L1011.4 219.2H1012.4L1012.4 212.3H1013.4L1013.4 206.6H1014.4L1014.4 198.5H1015.4L1015.4 175.6H1016.4L1016.4 141.7H1017.4L1017.4 107.0H1018.4L1018.4 90.3H1019.4L1019.4 80.6H1020.4L1020.4 74.8H1021.4L1021.4 72.3H1022.4L1022.4 75.4H1023.4L1023.4 79.0H1024.4L1024.4 77.5H1025.4L1025.4 80.2H1026.4L1026.4 76.8H1027.4L1027.4 85.1H1028.4L1028.4 88.9H1029.4L1029.4 81.5H1030.4L1030.4 80.7H1031.4L1031.4 82.4H1032.4L1032.4 79.9H1033.4L1033.4 84.9H1034.4L1034.4 80.7H1035.4L1035.4 81.8H1036.4L1036.4 83.1H1037.4L1037.4 84.0H1038.4L1038.4 82.6H1039.4L1039.4 83.9H1040.4L1040.4 86.1H1041.4L1041.4 83.0H1042.4L1042.4 86.4H1043.4L1043.4 88.0H1044.4L1044.4 85.0H1045.4L1045.4 87.9H1046.4L1046.4 89.5H1047.4L1047.4 89.0H1048.4L1048.4 88.3H1049.4L1049.4 89.4H1050.4L1050.4 90.4H1051.4L1051.4 89.6H1052.4L1052.4 89.2H1053.4L1053.4 90.9H1054.4L1054.4 91.1H1055.4L1055.4 87.8H1056.4L1056.4 88.6H1057.4L1057.4 89.4H1058.4L1058.4 88.2H1059.4L1059.4 91.5H1060.4L1060.4 94.1H1061.4L1061.4 91.2H1062.4L1062.4 89.2H1063.4L1063.4 91.3H1064.4L1064.4 91.5H1065.4L1065.4 92.7H1066.4L1066.4 93.0H1067.4L1067.4 90.2H1068.4L1068.4 92.4H1069.4L1069.4 95.5H1070.4L1070.4 24.2H1071.4L1071.4 24.2H1072.4L1072.4 93.7H1073.4L1073.4 91.8H1074.4L1074.4 92.6H1075.4L1075.4 91.6H1076.4L1076.4 92.5H1077.4L1077.4 94.5H1078.4L1078.4 91.1H1079.4L1079.4 97.0H1080.4L1080.4 91.9H1081.4L1081.4 104.7H1082.4L1082.4 92.5H1083.4L1083.4 89.7H1084.4L1084.4 93.0H1085.4L1085.4 90.8H1086.4L1086.4 95.0H1087.4L1087.4 91.7H1088.4L1088.4 95.4H1089.4L1089.4 91.0H1090.4L1090.4 92.7H1091.4L1091.4 90.6H1092.4L1092.4 88.7H1093.4L1093.4 94.3H1094.4L1094.4 84.9H1095.4L1095.4 83.5H1096.4L1096.4 79.9H1097.4L1097.4 84.2H1098.4L1098.4 92.9H1099.4L1099.4 108.7H1100.4L1100.4 136.7H1101.4L1101.4 169.5H1102.4L1102.4 202.6H1103.4L1103.4 233.0H1104.4L1104.4 230.8H1105.4L1105.4 230.6H1106.4L1106.4 234.2H1107.4L1107.4 196.4H1108.4L1108.4 196.4H1109.4L1109.4 236.2H1110.4L1110.4 233.4H1111.4L1111.4 237.5H1112.4L1112.4 235.3H1113.4L1113.4 235.6H1114.4L1114.4 238.4H1115.4L1115.4 239.2H1116.4L1116.4 243.5H1117.4L1117.4 241.2H1118.4L1118.4 245.2H1119.4L1119.4 242.3H1120.4L1120.4 234.9H1121.4L1121.4 234.9H1122.4L1122.4 237.0H1123.4L1123.4 238.5H1124.4L1124.4 236.4H1125.4L1125.4 241.1H1126.4L1126.4 242.3H1127.4L1127.4 241.9H1128.4L1128.4 242.8H1129.4L1129.4 243.1H1130.4L1130.4 253.6H1131.4L1131.4 248.1H1132.4L1132.4 247.6H1133.4L1133.4 245.8H1134.4L1134.4 250.6H1135.4L1135.4 251.2H1136.4L1136.4 251.5H1137.4L1137.4 254.2H1138.4L1138.4 256.1H1139.4L1139.4 254.4H1140.4L1140.4 255.5H1141.4L1141.4 255.6H1142.4L1142.4 255.5H1143.4L1143.4 257.1H1144.4L1144.4 257.6H1145.4L1145.4 260.6H1146.4L1146.4 222.0H1147.4L1147.4 222.0H1148.4L1148.4 261.4H1149.4L1149.4 262.1H1150.4L1150.4 266.6H1151.4L1151.4 268.3H1152.4L1152.4 268.1H1153.4L1153.4 269.2H1154.4L1154.4 267.4H1155.4L1155.4 267.1H1156.4L1156.4 273.5H1157.4L1157.4 271.7H1158.4L1158.4 274.9H1159.4L1159.4 284.1H1160.4L1160.4 277.6H1161.4L1161.4 277.5H1162.4L1162.4 282.0H1163.4L1163.4 283.7H1164.4L1164.4 284.2H1165.4L1165.4 285.4H1166.4L1166.4 286.4H1167.4V312z" fill="#2fe02f" stroke="none"/><path d="M0.4 312L0.4 220.1H1.4L1.4 192.5H2.4L2.4 187.8H3.4L3.4 187.3H4.4L4.4 189.4H5.4L5.4 188.1H6.4L6.4 198.8H7.4L7.4 182.2H8.4L8.4 186.4H9.4L9.4 182.4H10.4L10.4 183.9H11.4L11.4 182.6H12.4L12.4 183.8H13.4L13.4 179.0H14.4L14.4 190.0H15.4L15.4 179.4H16.4L16.4 182.5H17.4L17.4 183.2H18.4L18.4 182.0H19.4L19.4 178.3H20.4L20.4 177.0H21.4L21.4 178.7H22.4L22.4 171.9H23.4L23.4 173.4H24.4L24.4 167.7H25.4L25.4 165.6H26.4L26.4 171.4H27.4L27.4 174.7H28.4L28.4 184.2H29.4L29.4 187.4H30.4L30.4 188.9H31.4L31.4 191.7H32.4L32.4 192.1H33.4L33.4 189.6H34.4L34.4 189.0H35.4L35.4 189.8H36.4L36.4 192.5H37.4L37.4 189.0H38.4L38.4 189.6H39.4L39.4 189.3H40.4L40.4 191.0H41.4L41.4 203.5H42.4L42.4 189.2H43.4L43.4 189.4H44.4L44.4 189.0H45.4L45.4 186.4H46.4L46.4 189.8H47.4L47.4 180.5H48.4L48.4 176.8H49.4L49.4 168.6H50.4L50.4 173.6H51.4L51.4 179.3H52.4L52.4 186.6H53.4L53.4 194.2H54.4L54.4 206.5H55.4L55.4 198.2H56.4L56.4 198.1H57.4L57.4 200.8H58.4L58.4 202.3H59.4L59.4 201.4H60.4L60.4 201.9H61.4L61.4 204.2H62.4L62.4 202.0H63.4L63.4 202.5H64.4L64.4 203.6H65.4L65.4 202.8H66.4L66.4 200.8H67.4L67.4 201.6H68.4L68.4 205.3H69.4L69.4 201.1H70.4L70.4 210.0H71.4L71.4 201.3H72.4L72.4 204.7H73.4L73.4 206.0H74.4L74.4 203.3H75.4L75.4 219.0H76.4L76.4 205.3H77.4L77.4 203.9H78.4L78.4 202.1H79.4L79.4 205.7H80.4L80.4 203.4H81.4L81.4 205.2H82.4L82.4 202.1H83.4L83.4 203.6H84.4L84.4 205.4H85.4L85.4 205.3H86.4L86.4 203.3H87.4L87.4 202.6H88.4L88.4 205.4H89.4L89.4 204.7H90.4L90.4 207.5H91.4L91.4 213.1H92.4L92.4 205.3H93.4L93.4 207.1H94.4L94.4 206.8H95.4L95.4 203.7H96.4L96.4 207.9H97.4L97.4 203.8H98.4L98.4 203.5H99.4L99.4 153.6H100.4L100.4 153.6H101.4L101.4 207.1H102.4L102.4 204.1H103.4L103.4 204.3H104.4L104.4 204.4H105.4L105.4 203.9H106.4L106.4 203.9H107.4L107.4 204.6H108.4L108.4 203.8H109.4L109.4 205.0H110.4L110.4 203.7H111.4L111.4 202.8H112.4L112.4 203.9H113.4L113.4 201.6H114.4L114.4 203.9H115.4L115.4 202.4H116.4L116.4 200.3H117.4L117.4 202.1H118.4L118.4 198.2H119.4L119.4 197.4H120.4L120.4 203.2H121.4L121.4 196.0H122.4L122.4 195.3H123.4L123.4 192.1H124.4L124.4 189.2H125.4L125.4 191.1H126.4L126.4 194.5H127.4L127.4 197.7H128.4L128.4 197.8H129.4L129.4 197.6H130.4L130.4 201.5H131.4L131.4 208.0H132.4L132.4 203.8H133.4L133.4 202.5H134.4L134.4 199.4H135.4L135.4 204.0H136.4L136.4 165.7H137.4L137.4 165.7H138.4L138.4 205.0H139.4L139.4 203.0H140.4L140.4 203.5H141.4L141.4 206.0H142.4L142.4 203.8H143.4L143.4 207.5H144.4L144.4 203.5H145.4L145.4 197.6H146.4L146.4 172.6H147.4L147.4 141.0H148.4L148.4 110.8H149.4L149.4 87.9H150.4L150.4 75.5H151.4L151.4 78.7H152.4L152.4 82.4H153.4L153.4 81.3H154.4L154.4 96.8H155.4L155.4 85.0H156.4L156.4 88.1H157.4L157.4 89.2H158.4L158.4 90.5H159.4L159.4 88.3H160.4L160.4 89.3H161.4L161.4 88.7H162.4L162.4 104.0H163.4L163.4 88.1H164.4L164.4 88.6H165.4L165.4 89.5H166.4L166.4 94.7H167.4L167.4 90.6H168.4L168.4 93.9H169.4L169.4 91.0H170.4L170.4 91.3H171.4L171.4 95.6H172.4L172.4 94.7H173.4L173.4 95.6H174.4L174.4 93.1H175.4L175.4 16.1H176.4L176.4 16.1H177.4L177.4 94.6H178.4L178.4 95.4H179.4L179.4 94.8H180.4L180.4 94.8H181.4L181.4 95.3H182.4L182.4 99.2H183.4L183.4 93.8H184.4L184.4 103.7H185.4L185.4 95.1H186.4L186.4 93.0H187.4L187.4 96.3H188.4L188.4 96.9H189.4L189.4 96.6H190.4L190.4 96.2H191.4L191.4 95.0H192.4L192.4 94.2H193.4L193.4 94.4H194.4L194.4 112.0H195.4L195.4 95.6H196.4L196.4 92.6H197.4L197.4 93.5H198.4L198.4 95.0H199.4L199.4 94.1H200.4L200.4 90.5H201.4L201.4 92.1H202.4L202.4 92.5H203.4L203.4 93.1H204.4L204.4 93.4H205.4L205.4 94.3H206.4L206.4 91.9H207.4L207.4 90.2H208.4L208.4 89.7H209.4L209.4 89.3H210.4L210.4 91.3H211.4L211.4 90.6H212.4L212.4 90.9H213.4L213.4 89.8H214.4L214.4 87.0H215.4L215.4 91.5H216.4L216.4 98.3H217.4L217.4 87.1H218.4L218.4 90.1H219.4L219.4 85.8H220.4L220.4 84.6H221.4L221.4 81.8H222.4L222.4 83.1H223.4L223.4 78.8H224.4L224.4 77.7H225.4L225.4 82.6H226.4L226.4 93.0H227.4L227.4 120.6H228.4L228.4 148.4H229.4L229.4 179.3H230.4L230.4 195.3H231.4L231.4 196.1H232.4L232.4 198.6H233.4L233.4 195.5H234.4L234.4 208.3H235.4L235.4 195.2H236.4L236.4 198.4H237.4L237.4 194.9H238.4L238.4 195.6H239.4L239.4 198.5H240.4L240.4 197.9H241.4L241.4 197.8H242.4L242.4 195.3H243.4L243.4 196.7H244.4L244.4 199.1H245.4L245.4 198.4H246.4L246.4 199.2H247.4L247.4 199.6H248.4L248.4 203.7H249.4L249.4 200.7H250.4L250.4 199.5H251.4L251.4 208.2H252.4L252.4 200.1H253.4L253.4 200.8H254.4L254.4 202.3H255.4L255.4 201.5H256.4L256.4 200.7H257.4L257.4 202.6H258.4L258.4 199.3H259.4L259.4 202.6H260.4L260.4 200.6H261.4L261.4 201.7H262.4L262.4 201.2H263.4L263.4 197.4H264.4L264.4 201.1H265.4L265.4 199.2H266.4L266.4 198.7H267.4L267.4 198.5H268.4L268.4 199.6H269.4L269.4 199.4H270.4L270.4 214.0H271.4L271.4 201.4H272.4L272.4 143.2H273.4L273.4 143.2H274.4L274.4 197.3H275.4L275.4 201.0H276.4L276.4 199.2H277.4L277.4 198.5H278.4L278.4 196.6H279.4L279.4 198.3H280.4L280.4 197.7H281.4L281.4 196.6H282.4L282.4 198.4H283.4L283.4 197.0H284.4L284.4 199.1H285.4L285.4 198.4H286.4L286.4 196.1H287.4L287.4 199.5H288.4L288.4 205.7H289.4L289.4 198.4H290.4L290.4 192.5H291.4L291.4 196.7H292.4L292.4 195.6H293.4L293.4 193.9H294.4L294.4 192.4H295.4L295.4 191.2H296.4L296.4 200.6H297.4L297.4 185.3H298.4L298.4 176.2H299.4L299.4 174.5H300.4L300.4 174.2H301.4L301.4 177.0H302.4L302.4 179.8H303.4L303.4 182.7H304.4L304.4 181.6H305.4L305.4 182.2H306.4L306.4 181.3H307.4L307.4 182.5H308.4L308.4 184.4H309.4L309.4 184.8H310.4L310.4 180.3H311.4L311.4 183.1H312.4L312.4 185.2H313.4L313.4 181.6H314.4L314.4 186.6H315.4L315.4 186.2H316.4L316.4 184.9H317.4L317.4 186.0H318.4L318.4 185.3H319.4L319.4 188.9H320.4L320.4 185.3H321.4L321.4 185.8H322.4L322.4 182.8H323.4L323.4 194.1H324.4L324.4 180.5H325.4L325.4 173.6H326.4L326.4 181.6H327.4L327.4 183.0H328.4L328.4 184.3H329.4L329.4 189.7H330.4L330.4 188.0H331.4L331.4 190.2H332.4L332.4 187.5H333.4L333.4 193.6H334.4L334.4 200.7H335.4L335.4 191.0H336.4L336.4 193.3H337.4L337.4 191.7H338.4L338.4 189.7H339.4L339.4 205.8H340.4L340.4 192.3H341.4L341.4 192.1H342.4L342.4 191.3H343.4L343.4 193.0H344.4L344.4 193.1H345.4L345.4 189.3H346.4L346.4 193.3H347.4L347.4 191.0H348.4L348.4 189.6H349.4L349.4 150.0H350.4L350.4 150.0H351.4L351.4 193.8H352.4L352.4 192.7H353.4L353.4 191.9H354.4L354.4 192.7H355.4L355.4 193.2H356.4L356.4 194.2H357.4L357.4 191.8H358.4L358.4 194.6H359.4L359.4 193.1H360.4L360.4 192.7H361.4L361.4 192.1H362.4L362.4 193.2H363.4L363.4 193.4H364.4L364.4 193.1H365.4L365.4 192.2H366.4L366.4 194.7H367.4L367.4 193.9H368.4L368.4 193.4H369.4L369.4 193.9H370.4L370.4 194.1H371.4L371.4 194.8H372.4L372.4 194.2H373.4L373.4 192.6H374.4L374.4 190.3H375.4L375.4 192.8H376.4L376.4 194.4H377.4L377.4 193.0H378.4L378.4 192.4H379.4L379.4 194.3H380.4L380.4 193.7H381.4L381.4 189.8H382.4L382.4 193.2H383.4L383.4 192.0H384.4L384.4 191.1H385.4L385.4 192.7H386.4L386.4 193.3H387.4L387.4 191.2H388.4L388.4 194.7H389.4L389.4 189.9H390.4L390.4 192.4H391.4L391.4 186.3H392.4L392.4 178.4H393.4L393.4 165.6H394.4L394.4 129.7H395.4L395.4 104.7H396.4L396.4 86.1H397.4L397.4 82.0H398.4L398.4 81.7H399.4L399.4 84.4H400.4L400.4 83.3H401.4L401.4 90.4H402.4L402.4 94.1H403.4L403.4 87.0H404.4L404.4 86.2H405.4L405.4 88.4H406.4L406.4 86.4H407.4L407.4 88.9H408.4L408.4 90.5H409.4L409.4 87.3H410.4L410.4 90.9H411.4L411.4 89.5H412.4L412.4 90.2H413.4L413.4 91.0H414.4L414.4 90.4H415.4L415.4 88.0H416.4L416.4 89.1H417.4L417.4 93.3H418.4L418.4 92.4H419.4L419.4 98.2H420.4L420.4 92.0H421.4L421.4 91.8H422.4L422.4 92.5H423.4L423.4 93.0H424.4L424.4 93.3H425.4L425.4 94.6H426.4L426.4 90.1H427.4L427.4 93.4H428.4L428.4 95.6H429.4L429.4 91.8H430.4L430.4 92.8H431.4L431.4 95.8H432.4L432.4 99.7H433.4L433.4 95.7H434.4L434.4 94.9H435.4L435.4 93.0H436.4L436.4 96.1H437.4L437.4 95.9H438.4L438.4 93.5H439.4L439.4 97.5H440.4L440.4 95.5H441.4L441.4 96.5H442.4L442.4 96.2H443.4L443.4 94.4H444.4L444.4 95.5H445.4L445.4 102.1H446.4L446.4 95.6H447.4L447.4 94.2H448.4L448.4 14.1H449.4L449.4 14.1H450.4L450.4 93.8H451.4L451.4 95.1H452.4L452.4 94.1H453.4L453.4 95.4H454.4L454.4 92.7H455.4L455.4 92.3H456.4L456.4 99.4H457.4L457.4 92.9H458.4L458.4 89.8H459.4L459.4 93.3H460.4L460.4 93.7H461.4L461.4 91.1H462.4L462.4 91.0H463.4L463.4 91.7H464.4L464.4 91.8H465.4L465.4 89.1H466.4L466.4 101.0H467.4L467.4 87.4H468.4L468.4 84.7H469.4L469.4 84.6H470.4L470.4 82.3H471.4L471.4 84.2H472.4L472.4 82.9H473.4L473.4 80.2H474.4L474.4 83.6H475.4L475.4 96.8H476.4L476.4 125.2H477.4L477.4 152.5H478.4L478.4 177.2H479.4L479.4 181.9H480.4L480.4 183.5H481.4L481.4 183.6H482.4L482.4 185.3H483.4L483.4 188.8H484.4L484.4 185.1H485.4L485.4 182.6H486.4L486.4 182.6H487.4L487.4 185.0H488.4L488.4 185.3H489.4L489.4 186.8H490.4L490.4 188.6H491.4L491.4 183.0H492.4L492.4 183.3H493.4L493.4 181.5H494.4L494.4 179.5H495.4L495.4 181.3H496.4L496.4 176.4H497.4L497.4 173.7H498.4L498.4 179.6H499.4L499.4 184.2H500.4L500.4 188.5H501.4L501.4 203.0H502.4L502.4 193.4H503.4L503.4 196.3H504.4L504.4 194.4H505.4L505.4 196.4H506.4L506.4 197.5H507.4L507.4 198.3H508.4L508.4 200.1H509.4L509.4 198.1H510.4L510.4 201.4H511.4L511.4 199.0H512.4L512.4 200.8H513.4L513.4 200.7H514.4L514.4 197.6H515.4L515.4 199.4H516.4L516.4 198.1H517.4L517.4 200.6H518.4L518.4 198.7H519.4L519.4 200.2H520.4L520.4 210.9H521.4L521.4 201.3H522.4L522.4 202.8H523.4L523.4 199.5H524.4L524.4 135.9H525.4L525.4 135.9H526.4L526.4 216.6H527.4L527.4 201.4H528.4L528.4 201.3H529.4L529.4 201.5H530.4L530.4 200.0H531.4L531.4 201.9H532.4L532.4 200.8H533.4L533.4 201.8H534.4L534.4 201.5H535.4L535.4 203.8H536.4L536.4 201.0H537.4L537.4 209.7H538.4L538.4 202.2H539.4L539.4 200.3H540.4L540.4 199.1H541.4L541.4 202.2H542.4L542.4 203.7H543.4L543.4 215.1H544.4L544.4 199.9H545.4L545.4 200.5H546.4L546.4 201.0H547.4L547.4 199.4H548.4L548.4 198.8H549.4L549.4 202.8H550.4L550.4 209.8H551.4L551.4 201.3H552.4L552.4 199.8H553.4L553.4 202.8H554.4L554.4 202.7H555.4L555.4 201.4H556.4L556.4 202.4H557.4L557.4 198.9H558.4L558.4 199.5H559.4L559.4 200.0H560.4L560.4 199.6H561.4L561.4 199.5H562.4L562.4 200.7H563.4L563.4 196.7H564.4L564.4 195.1H565.4L565.4 196.0H566.4L566.4 196.7H567.4L567.4 197.1H568.4L568.4 196.5H569.4L569.4 193.9H570.4L570.4 188.4H571.4L571.4 184.5H572.4L572.4 183.4H573.4L573.4 176.1H574.4L574.4 175.7H575.4L575.4 179.9H576.4L576.4 184.5H577.4L577.4 184.0H578.4L578.4 185.4H579.4L579.4 182.4H580.4L580.4 185.0H581.4L581.4 187.2H582.4L582.4 186.0H583.4L583.4 189.6H584.4L584.4 186.0H585.4L585.4 189.9H586.4L586.4 187.0H587.4L587.4 184.6H588.4L588.4 186.5H589.4L589.4 183.4H590.4L590.4 185.0H591.4L591.4 187.1H592.4L592.4 187.5H593.4L593.4 187.1H594.4L594.4 182.4H595.4L595.4 181.8H596.4L596.4 177.8H597.4L597.4 175.9H598.4L598.4 172.0H599.4L599.4 180.2H600.4L600.4 176.9H601.4L601.4 182.4H602.4L602.4 180.6H603.4L603.4 180.8H604.4L604.4 180.6H605.4L605.4 182.0H606.4L606.4 182.8H607.4L607.4 184.9H608.4L608.4 184.2H609.4L609.4 183.2H610.4L610.4 185.2H611.4L611.4 182.8H612.4L612.4 183.5H613.4L613.4 184.8H614.4L614.4 184.5H615.4L615.4 185.6H616.4L616.4 187.0H617.4L617.4 187.4H618.4L618.4 188.1H619.4L619.4 187.6H620.4L620.4 187.8H621.4L621.4 186.3H622.4L622.4 189.6H623.4L623.4 73.7H624.4L624.4 73.7H625.4L625.4 188.8H626.4L626.4 187.8H627.4L627.4 188.8H628.4L628.4 186.9H629.4L629.4 189.3H630.4L630.4 186.5H631.4L631.4 187.1H632.4L632.4 187.3H633.4L633.4 189.4H634.4L634.4 188.5H635.4L635.4 193.8H636.4L636.4 184.8H637.4L637.4 186.5H638.4L638.4 186.9H639.4L639.4 195.7H640.4L640.4 184.7H641.4L641.4 185.3H642.4L642.4 183.6H643.4L643.4 183.0H644.4L644.4 187.6H645.4L645.4 183.5H646.4L646.4 183.2H647.4L647.4 178.4H648.4L648.4 173.7H649.4L649.4 179.5H650.4L650.4 184.4H651.4L651.4 198.0H652.4L652.4 186.3H653.4L653.4 184.1H654.4L654.4 187.6H655.4L655.4 188.1H656.4L656.4 183.8H657.4L657.4 188.7H658.4L658.4 187.6H659.4L659.4 190.2H660.4L660.4 187.1H661.4L661.4 183.6H662.4L662.4 184.1H663.4L663.4 184.5H664.4L664.4 197.1H665.4L665.4 181.5H666.4L666.4 183.5H667.4L667.4 178.9H668.4L668.4 178.3H669.4L669.4 173.1H670.4L670.4 173.6H671.4L671.4 173.4H672.4L672.4 179.5H673.4L673.4 186.0H674.4L674.4 193.7H675.4L675.4 214.0H676.4L676.4 202.7H677.4L677.4 205.0H678.4L678.4 206.5H679.4L679.4 204.6H680.4L680.4 207.5H681.4L681.4 217.1H682.4L682.4 208.1H683.4L683.4 207.7H684.4L684.4 209.0H685.4L685.4 211.1H686.4L686.4 208.4H687.4L687.4 208.5H688.4L688.4 208.0H689.4L689.4 212.1H690.4L690.4 208.3H691.4L691.4 209.7H692.4L692.4 210.6H693.4L693.4 209.3H694.4L694.4 211.1H695.4L695.4 208.3H696.4L696.4 210.2H697.4L697.4 217.4H698.4L698.4 185.4H699.4L699.4 185.4H700.4L700.4 212.4H701.4L701.4 211.5H702.4L702.4 211.9H703.4L703.4 213.9H704.4L704.4 211.4H705.4L705.4 212.2H706.4L706.4 219.6H707.4L707.4 221.0H708.4L708.4 211.1H709.4L709.4 209.6H710.4L710.4 208.1H711.4L711.4 211.4H712.4L712.4 210.8H713.4L713.4 209.8H714.4L714.4 209.1H715.4L715.4 210.4H716.4L716.4 210.3H717.4L717.4 210.1H718.4L718.4 223.1H719.4L719.4 211.9H720.4L720.4 158.1H721.4L721.4 158.1H722.4L722.4 208.2H723.4L723.4 209.1H724.4L724.4 220.4H725.4L725.4 207.4H726.4L726.4 208.3H727.4L727.4 209.7H728.4L728.4 209.3H729.4L729.4 205.2H730.4L730.4 206.2H731.4L731.4 213.3H732.4L732.4 207.2H733.4L733.4 222.1H734.4L734.4 204.4H735.4L735.4 204.6H736.4L736.4 200.9H737.4L737.4 201.6H738.4L738.4 205.4H739.4L739.4 203.5H740.4L740.4 202.3H741.4L741.4 200.5H742.4L742.4 195.4H743.4L743.4 195.5H744.4L744.4 194.2H745.4L745.4 188.6H746.4L746.4 186.5H747.4L747.4 186.2H748.4L748.4 184.4H749.4L749.4 189.3H750.4L750.4 190.0H751.4L751.4 189.9H752.4L752.4 192.0H753.4L753.4 189.9H754.4L754.4 192.8H755.4L755.4 194.5H756.4L756.4 193.2H757.4L757.4 166.6H758.4L758.4 166.6H759.4L759.4 194.0H760.4L760.4 197.1H761.4L761.4 194.1H762.4L762.4 196.3H763.4L763.4 197.3H764.4L764.4 194.2H765.4L765.4 186.9H766.4L766.4 156.5H767.4L767.4 122.0H768.4L768.4 95.8H769.4L769.4 83.8H770.4L770.4 79.1H771.4L771.4 75.3H772.4L772.4 78.8H773.4L773.4 84.9H774.4L774.4 83.1H775.4L775.4 82.2H776.4L776.4 82.3H777.4L777.4 85.7H778.4L778.4 83.7H779.4L779.4 96.0H780.4L780.4 86.6H781.4L781.4 82.4H782.4L782.4 85.1H783.4L783.4 89.3H784.4L784.4 82.6H785.4L785.4 86.9H786.4L786.4 94.5H787.4L787.4 86.8H788.4L788.4 86.9H789.4L789.4 95.9H790.4L790.4 84.6H791.4L791.4 88.3H792.4L792.4 89.1H793.4L793.4 87.6H794.4L794.4 90.3H795.4L795.4 88.5H796.4L796.4 43.9H797.4L797.4 43.9H798.4L798.4 91.3H799.4L799.4 91.2H800.4L800.4 89.9H801.4L801.4 90.6H802.4L802.4 92.0H803.4L803.4 92.2H804.4L804.4 92.8H805.4L805.4 89.5H806.4L806.4 87.3H807.4L807.4 99.0H808.4L808.4 88.6H809.4L809.4 90.2H810.4L810.4 89.9H811.4L811.4 93.9H812.4L812.4 91.7H813.4L813.4 92.6H814.4L814.4 90.2H815.4L815.4 87.5H816.4L816.4 90.1H817.4L817.4 95.3H818.4L818.4 89.1H819.4L819.4 89.8H820.4L820.4 88.7H821.4L821.4 91.1H822.4L822.4 90.5H823.4L823.4 91.3H824.4L824.4 90.2H825.4L825.4 88.2H826.4L826.4 90.6H827.4L827.4 90.6H828.4L828.4 90.2H829.4L829.4 90.7H830.4L830.4 91.7H831.4L831.4 91.0H832.4L832.4 90.5H833.4L833.4 87.0H834.4L834.4 88.4H835.4L835.4 86.0H836.4L836.4 85.3H837.4L837.4 86.2H838.4L838.4 84.9H839.4L839.4 81.7H840.4L840.4 82.0H841.4L841.4 82.6H842.4L842.4 81.9H843.4L843.4 83.3H844.4L844.4 85.6H845.4L845.4 76.9H846.4L846.4 78.7H847.4L847.4 75.7H848.4L848.4 90.9H849.4L849.4 116.0H850.4L850.4 123.0H851.4L851.4 152.2H852.4L852.4 165.3H853.4L853.4 174.8H854.4L854.4 177.7H855.4L855.4 180.4H856.4L856.4 176.7H857.4L857.4 176.9H858.4L858.4 181.0H859.4L859.4 179.3H860.4L860.4 177.2H861.4L861.4 179.2H862.4L862.4 177.2H863.4L863.4 182.0H864.4L864.4 177.8H865.4L865.4 179.3H866.4L866.4 179.7H867.4L867.4 179.9H868.4L868.4 180.8H869.4L869.4 179.2H870.4L870.4 180.8H871.4L871.4 182.9H872.4L872.4 179.4H873.4L873.4 178.2H874.4L874.4 181.2H875.4L875.4 179.0H876.4L876.4 178.7H877.4L877.4 177.0H878.4L878.4 180.4H879.4L879.4 178.1H880.4L880.4 178.4H881.4L881.4 181.0H882.4L882.4 182.7H883.4L883.4 180.5H884.4L884.4 179.0H885.4L885.4 179.3H886.4L886.4 177.5H887.4L887.4 181.3H888.4L888.4 180.4H889.4L889.4 180.2H890.4L890.4 183.1H891.4L891.4 193.1H892.4L892.4 178.5H893.4L893.4 179.9H894.4L894.4 177.1H895.4L895.4 144.3H896.4L896.4 144.3H897.4L897.4 178.0H898.4L898.4 180.7H899.4L899.4 176.7H900.4L900.4 178.7H901.4L901.4 178.7H902.4L902.4 177.8H903.4L903.4 178.4H904.4L904.4 177.7H905.4L905.4 192.0H906.4L906.4 178.2H907.4L907.4 177.9H908.4L908.4 177.9H909.4L909.4 179.0H910.4L910.4 173.6H911.4L911.4 178.9H912.4L912.4 177.5H913.4L913.4 178.0H914.4L914.4 178.0H915.4L915.4 178.0H916.4L916.4 175.0H917.4L917.4 177.0H918.4L918.4 175.5H919.4L919.4 178.7H920.4L920.4 181.2H921.4L921.4 178.5H922.4L922.4 175.7H923.4L923.4 178.5H924.4L924.4 175.5H925.4L925.4 175.7H926.4L926.4 176.0H927.4L927.4 177.2H928.4L928.4 175.6H929.4L929.4 182.7H930.4L930.4 174.3H931.4L931.4 174.5H932.4L932.4 175.1H933.4L933.4 177.1H934.4L934.4 180.5H935.4L935.4 180.5H936.4L936.4 172.9H937.4L937.4 177.3H938.4L938.4 176.7H939.4L939.4 174.8H940.4L940.4 172.1H941.4L941.4 172.6H942.4L942.4 168.3H943.4L943.4 169.6H944.4L944.4 166.1H945.4L945.4 166.7H946.4L946.4 162.6H947.4L947.4 172.4H948.4L948.4 172.3H949.4L949.4 179.5H950.4L950.4 206.4H951.4L951.4 189.8H952.4L952.4 197.4H953.4L953.4 197.9H954.4L954.4 201.0H955.4L955.4 200.6H956.4L956.4 201.9H957.4L957.4 203.2H958.4L958.4 204.5H959.4L959.4 207.3H960.4L960.4 204.5H961.4L961.4 205.0H962.4L962.4 206.1H963.4L963.4 207.7H964.4L964.4 208.3H965.4L965.4 208.6H966.4L966.4 205.9H967.4L967.4 209.1H968.4L968.4 209.4H969.4L969.4 217.0H970.4L970.4 216.2H971.4L971.4 157.3H972.4L972.4 157.3H973.4L973.4 215.4H974.4L974.4 215.3H975.4L975.4 216.3H976.4L976.4 229.8H977.4L977.4 218.1H978.4L978.4 216.0H979.4L979.4 217.7H980.4L980.4 215.2H981.4L981.4 217.4H982.4L982.4 216.6H983.4L983.4 214.5H984.4L984.4 218.5H985.4L985.4 218.1H986.4L986.4 215.6H987.4L987.4 215.1H988.4L988.4 216.3H989.4L989.4 217.9H990.4L990.4 217.0H991.4L991.4 218.5H992.4L992.4 217.7H993.4L993.4 218.5H994.4L994.4 219.2H995.4L995.4 218.6H996.4L996.4 218.8H997.4L997.4 216.7H998.4L998.4 218.1H999.4L999.4 216.1H1000.4L1000.4 219.4H1001.4L1001.4 228.8H1002.4L1002.4 215.0H1003.4L1003.4 215.7H1004.4L1004.4 218.9H1005.4L1005.4 218.2H1006.4L1006.4 215.9H1007.4L1007.4 213.4H1008.4L1008.4 216.5H1009.4L1009.4 215.9H1010.4L1010.4 213.7H1011.4L1011.4 218.1H1012.4L1012.4 210.6H1013.4L1013.4 209.2H1014.4L1014.4 197.4H1015.4L1015.4 174.8H1016.4L1016.4 140.7H1017.4L1017.4 108.2H1018.4L1018.4 89.1H1019.4L1019.4 79.4H1020.4L1020.4 74.5H1021.4L1021.4 71.1H1022.4L1022.4 77.3H1023.4L1023.4 78.4H1024.4L1024.4 78.4H1025.4L1025.4 78.4H1026.4L1026.4 77.3H1027.4L1027.4 84.3H1028.4L1028.4 86.8H1029.4L1029.4 80.1H1030.4L1030.4 79.7H1031.4L1031.4 80.0H1032.4L1032.4 81.3H1033.4L1033.4 86.4H1034.4L1034.4 80.6H1035.4L1035.4 80.7H1036.4L1036.4 82.3H1037.4L1037.4 83.3H1038.4L1038.4 83.5H1039.4L1039.4 83.4H1040.4L1040.4 86.0H1041.4L1041.4 83.7H1042.4L1042.4 87.3H1043.4L1043.4 89.2H1044.4L1044.4 82.8H1045.4L1045.4 84.4H1046.4L1046.4 89.8H1047.4L1047.4 89.3H1048.4L1048.4 88.2H1049.4L1049.4 89.5H1050.4L1050.4 89.6H1051.4L1051.4 88.4H1052.4L1052.4 88.7H1053.4L1053.4 89.0H1054.4L1054.4 89.9H1055.4L1055.4 88.1H1056.4L1056.4 88.9H1057.4L1057.4 89.1H1058.4L1058.4 87.7H1059.4L1059.4 92.5H1060.4L1060.4 94.5H1061.4L1061.4 93.3H1062.4L1062.4 90.5H1063.4L1063.4 91.3H1064.4L1064.4 91.8H1065.4L1065.4 92.0H1066.4L1066.4 91.3H1067.4L1067.4 90.7H1068.4L1068.4 91.9H1069.4L1069.4 94.2H1070.4L1070.4 24.2H1071.4L1071.4 24.2H1072.4L1072.4 93.1H1073.4L1073.4 90.5H1074.4L1074.4 93.1H1075.4L1075.4 91.5H1076.4L1076.4 91.6H1077.4L1077.4 94.1H1078.4L1078.4 91.0H1079.4L1079.4 95.3H1080.4L1080.4 90.8H1081.4L1081.4 102.4H1082.4L1082.4 92.9H1083.4L1083.4 90.5H1084.4L1084.4 94.7H1085.4L1085.4 91.0H1086.4L1086.4 92.6H1087.4L1087.4 90.4H1088.4L1088.4 94.4H1089.4L1089.4 90.6H1090.4L1090.4 91.1H1091.4L1091.4 90.0H1092.4L1092.4 87.5H1093.4L1093.4 94.9H1094.4L1094.4 85.7H1095.4L1095.4 83.7H1096.4L1096.4 79.1H1097.4L1097.4 82.8H1098.4L1098.4 93.8H1099.4L1099.4 109.4H1100.4L1100.4 138.5H1101.4L1101.4 169.6H1102.4L1102.4 201.3H1103.4L1103.4 235.4H1104.4L1104.4 230.9H1105.4L1105.4 228.5H1106.4L1106.4 233.3H1107.4L1107.4 196.4H1108.4L1108.4 196.4H1109.4L1109.4 235.8H1110.4L1110.4 233.0H1111.4L1111.4 236.5H1112.4L1112.4 234.6H1113.4L1113.4 236.6H1114.4L1114.4 237.2H1115.4L1115.4 240.4H1116.4L1116.4 241.8H1117.4L1117.4 239.5H1118.4L1118.4 244.9H1119.4L1119.4 242.0H1120.4L1120.4 233.0H1121.4L1121.4 234.0H1122.4L1122.4 238.0H1123.4L1123.4 240.3H1124.4L1124.4 236.9H1125.4L1125.4 243.1H1126.4L1126.4 243.4H1127.4L1127.4 244.7H1128.4L1128.4 243.3H1129.4L1129.4 246.2H1130.4L1130.4 256.1H1131.4L1131.4 251.5H1132.4L1132.4 250.9H1133.4L1133.4 250.7H1134.4L1134.4 254.5H1135.4L1135.4 254.6H1136.4L1136.4 254.0H1137.4L1137.4 257.7H1138.4L1138.4 259.3H1139.4L1139.4 257.2H1140.4L1140.4 259.9H1141.4L1141.4 259.1H1142.4L1142.4 258.4H1143.4L1143.4 262.0H1144.4L1144.4 262.2H1145.4L1145.4 265.4H1146.4L1146.4 211.6H1147.4L1147.4 211.6H1148.4L1148.4 265.3H1149.4L1149.4 266.4H1150.4L1150.4 270.0H1151.4L1151.4 272.8H1152.4L1152.4 270.5H1153.4L1153.4 272.6H1154.4L1154.4 272.2H1155.4L1155.4 272.5H1156.4L1156.4 277.8H1157.4L1157.4 279.6H1158.4L1158.4 281.9H1159.4L1159.4 288.8H1160.4L1160.4 282.6H1161.4L1161.4 282.7H1162.4L1162.4 287.4H1163.4L1163.4 287.1H1164.4L1164.4 291.0H1165.4L1165.4 290.8H1166.4L1166.4 293.9H1167.4V312z" fill="#f05050" stroke="none"/><path d="M0.4 312L0.4 219.9H1.4L1.4 191.3H2.4L2.4 187.1H3.4L3.4 186.5H4.4L4.4 188.5H5.4L5.4 188.0H6.4L6.4 199.5H7.4L7.4 182.9H8.4L8.4 188.1H9.4L9.4 183.6H10.4L10.4 185.4H11.4L11.4 182.8H12.4L12.4 182.3H13.4L13.4 178.6H14.4L14.4 190.3H15.4L15.4 179.8H16.4L16.4 180.9H17.4L17.4 182.0H18.4L18.4 183.0H19.4L19.4 177.4H20.4L20.4 177.9H21.4L21.4 178.7H22.4L22.4 172.8H23.4L23.4 170.8H24.4L24.4 167.3H25.4L25.4 165.8H26.4L26.4 172.0H27.4L27.4 175.6H28.4L28.4 185.6H29.4L29.4 187.6H30.4L30.4 189.9H31.4L31.4 191.5H32.4L32.4 191.4H33.4L33.4 190.4H34.4L34.4 189.6H35.4L35.4 190.2H36.4L36.4 191.6H37.4L37.4 188.9H38.4L38.4 188.8H39.4L39.4 188.8H40.4L40.4 191.8H41.4L41.4 204.7H42.4L42.4 189.4H43.4L43.4 189.0H44.4L44.4 190.3H45.4L45.4 186.5H46.4L46.4 187.6H47.4L47.4 179.5H48.4L48.4 176.0H49.4L49.4 167.6H50.4L50.4 174.9H51.4L51.4 181.4H52.4L52.4 185.3H53.4L53.4 195.9H54.4L54.4 207.2H55.4L55.4 198.8H56.4L56.4 200.5H57.4L57.4 201.6H58.4L58.4 201.2H59.4L59.4 200.0H60.4L60.4 203.9H61.4L61.4 204.1H62.4L62.4 201.9H63.4L63.4 201.2H64.4L64.4 202.5H65.4L65.4 202.7H66.4L66.4 202.2H67.4L67.4 199.5H68.4L68.4 205.6H69.4L69.4 200.6H70.4L70.4 211.1H71.4L71.4 202.4H72.4L72.4 203.9H73.4L73.4 204.0H74.4L74.4 205.0H75.4L75.4 220.5H76.4L76.4 204.4H77.4L77.4 203.8H78.4L78.4 203.4H79.4L79.4 206.1H80.4L80.4 203.9H81.4L81.4 206.6H82.4L82.4 203.3H83.4L83.4 203.7H84.4L84.4 206.1H85.4L85.4 205.3H86.4L86.4 203.2H87.4L87.4 203.7H88.4L88.4 207.0H89.4L89.4 205.8H90.4L90.4 206.0H91.4L91.4 212.7H92.4L92.4 205.5H93.4L93.4 205.4H94.4L94.4 207.9H95.4L95.4 203.7H96.4L96.4 208.4H97.4L97.4 205.4H98.4L98.4 204.0H99.4L99.4 149.4H100.4L100.4 149.4H101.4L101.4 207.9H102.4L102.4 205.3H103.4L103.4 204.9H104.4L104.4 204.2H105.4L105.4 204.6H106.4L106.4 205.0H107.4L107.4 204.9H108.4L108.4 203.2H109.4L109.4 206.6H110.4L110.4 205.0H111.4L111.4 202.9H112.4L112.4 201.8H113.4L113.4 202.1H114.4L114.4 203.1H115.4L115.4 202.5H116.4L116.4 200.9H117.4L117.4 199.7H118.4L118.4 199.9H119.4L119.4 196.6H120.4L120.4 203.7H121.4L121.4 197.4H122.4L122.4 196.9H123.4L123.4 193.1H124.4L124.4 189.1H125.4L125.4 190.8H126.4L126.4 195.4H127.4L127.4 198.4H128.4L128.4 199.1H129.4L129.4 197.7H130.4L130.4 202.5H131.4L131.4 209.2H132.4L132.4 205.3H133.4L133.4 202.9H134.4L134.4 201.2H135.4L135.4 204.0H136.4L136.4 161.5H137.4L137.4 161.5H138.4L138.4 205.5H139.4L139.4 205.2H140.4L140.4 203.7H141.4L141.4 206.7H142.4L142.4 206.1H143.4L143.4 205.1H144.4L144.4 201.2H145.4L145.4 197.0H146.4L146.4 173.3H147.4L147.4 142.4H148.4L148.4 111.0H149.4L149.4 89.3H150.4L150.4 76.0H151.4L151.4 77.7H152.4L152.4 84.7H153.4L153.4 83.1H154.4L154.4 95.6H155.4L155.4 85.2H156.4L156.4 87.2H157.4L157.4 90.2H158.4L158.4 86.7H159.4L159.4 89.3H160.4L160.4 90.3H161.4L161.4 87.4H162.4L162.4 106.3H163.4L163.4 89.8H164.4L164.4 90.9H165.4L165.4 89.6H166.4L166.4 93.1H167.4L167.4 91.4H168.4L168.4 95.4H169.4L169.4 93.3H170.4L170.4 92.3H171.4L171.4 94.5H172.4L172.4 95.6H173.4L173.4 95.3H174.4L174.4 95.3H175.4L175.4 11.8H176.4L176.4 11.8H177.4L177.4 96.4H178.4L178.4 95.9H179.4L179.4 94.2H180.4L180.4 95.2H181.4L181.4 96.7H182.4L182.4 98.3H183.4L183.4 95.8H184.4L184.4 104.4H185.4L185.4 96.2H186.4L186.4 96.0H187.4L187.4 95.1H188.4L188.4 98.9H189.4L189.4 96.6H190.4L190.4 96.3H191.4L191.4 96.4H192.4L192.4 93.6H193.4L193.4 94.8H194.4L194.4 111.3H195.4L195.4 93.9H196.4L196.4 92.3H197.4L197.4 92.1H198.4L198.4 94.6H199.4L199.4 92.6H200.4L200.4 91.5H201.4L201.4 93.9H202.4L202.4 94.2H203.4L203.4 91.0H204.4L204.4 94.4H205.4L205.4 93.3H206.4L206.4 91.5H207.4L207.4 92.1H208.4L208.4 89.3H209.4L209.4 91.5H210.4L210.4 92.0H211.4L211.4 91.8H212.4L212.4 89.3H213.4L213.4 91.9H214.4L214.4 87.0H215.4L215.4 92.7H216.4L216.4 99.8H217.4L217.4 87.0H218.4L218.4 91.2H219.4L219.4 87.8H220.4L220.4 84.6H221.4L221.4 84.0H222.4L222.4 83.9H223.4L223.4 78.2H224.4L224.4 77.6H225.4L225.4 84.0H226.4L226.4 95.0H227.4L227.4 120.7H228.4L228.4 148.4H229.4L229.4 180.4H230.4L230.4 193.0H231.4L231.4 195.5H232.4L232.4 196.7H233.4L233.4 197.3H234.4L234.4 209.0H235.4L235.4 194.8H236.4L236.4 197.4H237.4L237.4 196.6H238.4L238.4 196.4H239.4L239.4 200.5H240.4L240.4 197.5H241.4L241.4 200.2H242.4L242.4 196.9H243.4L243.4 199.3H244.4L244.4 199.2H245.4L245.4 198.9H246.4L246.4 198.5H247.4L247.4 198.6H248.4L248.4 202.9H249.4L249.4 201.9H250.4L250.4 199.0H251.4L251.4 209.3H252.4L252.4 200.0H253.4L253.4 200.6H254.4L254.4 202.9H255.4L255.4 201.5H256.4L256.4 202.3H257.4L257.4 203.3H258.4L258.4 199.9H259.4L259.4 203.1H260.4L260.4 200.2H261.4L261.4 199.9H262.4L262.4 200.9H263.4L263.4 198.4H264.4L264.4 201.3H265.4L265.4 199.5H266.4L266.4 199.3H267.4L267.4 200.4H268.4L268.4 200.7H269.4L269.4 198.9H270.4L270.4 214.5H271.4L271.4 201.7H272.4L272.4 139.0H273.4L273.4 139.0H274.4L274.4 196.5H275.4L275.4 201.0H276.4L276.4 198.4H277.4L277.4 197.7H278.4L278.4 196.2H279.4L279.4 198.2H280.4L280.4 197.1H281.4L281.4 197.5H282.4L282.4 196.1H283.4L283.4 198.3H284.4L284.4 199.6H285.4L285.4 197.7H286.4L286.4 196.1H287.4L287.4 200.0H288.4L288.4 202.9H289.4L289.4 199.1H290.4L290.4 193.8H291.4L291.4 198.8H292.4L292.4 197.3H293.4L293.4 194.8H294.4L294.4 192.7H295.4L295.4 192.6H296.4L296.4 202.4H297.4L297.4 185.0H298.4L298.4 177.3H299.4L299.4 173.1H300.4L300.4 174.8H301.4L301.4 179.1H302.4L302.4 178.9H303.4L303.4 182.9H304.4L304.4 182.9H305.4L305.4 181.4H306.4L306.4 181.9H307.4L307.4 183.8H308.4L308.4 183.9H309.4L309.4 187.2H310.4L310.4 182.3H311.4L311.4 183.7H312.4L312.4 186.1H313.4L313.4 182.5H314.4L314.4 187.5H315.4L315.4 185.1H316.4L316.4 186.1H317.4L317.4 185.9H318.4L318.4 186.0H319.4L319.4 189.4H320.4L320.4 185.0H321.4L321.4 186.2H322.4L322.4 183.5H323.4L323.4 193.6H324.4L324.4 178.8H325.4L325.4 171.8H326.4L326.4 185.0H327.4L327.4 183.7H328.4L328.4 184.8H329.4L329.4 188.0H330.4L330.4 188.6H331.4L331.4 190.9H332.4L332.4 190.1H333.4L333.4 195.0H334.4L334.4 200.2H335.4L335.4 191.8H336.4L336.4 191.1H337.4L337.4 193.3H338.4L338.4 190.7H339.4L339.4 205.6H340.4L340.4 193.6H341.4L341.4 193.1H342.4L342.4 191.0H343.4L343.4 192.2H344.4L344.4 193.4H345.4L345.4 190.5H346.4L346.4 193.5H347.4L347.4 190.8H348.4L348.4 190.8H349.4L349.4 145.7H350.4L350.4 145.7H351.4L351.4 193.5H352.4L352.4 193.8H353.4L353.4 192.9H354.4L354.4 194.9H355.4L355.4 193.6H356.4L356.4 194.4H357.4L357.4 192.6H358.4L358.4 194.1H359.4L359.4 193.9H360.4L360.4 192.8H361.4L361.4 194.1H362.4L362.4 193.5H363.4L363.4 194.0H364.4L364.4 193.5H365.4L365.4 193.4H366.4L366.4 195.0H367.4L367.4 195.1H368.4L368.4 194.1H369.4L369.4 195.5H370.4L370.4 194.9H371.4L371.4 195.1H372.4L372.4 195.2H373.4L373.4 193.6H374.4L374.4 191.2H375.4L375.4 192.5H376.4L376.4 195.6H377.4L377.4 193.3H378.4L378.4 193.4H379.4L379.4 192.9H380.4L380.4 194.5H381.4L381.4 191.5H382.4L382.4 193.0H383.4L383.4 191.0H384.4L384.4 190.6H385.4L385.4 191.6H386.4L386.4 192.1H387.4L387.4 192.2H388.4L388.4 194.7H389.4L389.4 191.3H390.4L390.4 191.5H391.4L391.4 184.9H392.4L392.4 177.7H393.4L393.4 167.0H394.4L394.4 129.8H395.4L395.4 104.5H396.4L396.4 86.6H397.4L397.4 80.8H398.4L398.4 82.5H399.4L399.4 86.2H400.4L400.4 85.9H401.4L401.4 91.9H402.4L402.4 93.0H403.4L403.4 87.7H404.4L404.4 88.6H405.4L405.4 88.1H406.4L406.4 89.1H407.4L407.4 87.5H408.4L408.4 88.5H409.4L409.4 88.3H410.4L410.4 90.2H411.4L411.4 90.2H412.4L412.4 93.3H413.4L413.4 91.8H414.4L414.4 91.0H415.4L415.4 92.5H416.4L416.4 89.7H417.4L417.4 93.9H418.4L418.4 92.5H419.4L419.4 100.2H420.4L420.4 92.6H421.4L421.4 94.7H422.4L422.4 94.0H423.4L423.4 93.9H424.4L424.4 93.6H425.4L425.4 95.7H426.4L426.4 90.7H427.4L427.4 93.5H428.4L428.4 96.5H429.4L429.4 92.0H430.4L430.4 93.0H431.4L431.4 96.2H432.4L432.4 100.4H433.4L433.4 96.6H434.4L434.4 96.0H435.4L435.4 93.2H436.4L436.4 95.7H437.4L437.4 94.8H438.4L438.4 94.5H439.4L439.4 97.2H440.4L440.4 95.2H441.4L441.4 94.1H442.4L442.4 96.2H443.4L443.4 95.7H444.4L444.4 95.9H445.4L445.4 103.5H446.4L446.4 94.9H447.4L447.4 94.5H448.4L448.4 9.9H449.4L449.4 9.9H450.4L450.4 95.5H451.4L451.4 93.7H452.4L452.4 93.7H453.4L453.4 93.9H454.4L454.4 95.3H455.4L455.4 93.4H456.4L456.4 98.9H457.4L457.4 94.8H458.4L458.4 89.2H459.4L459.4 93.7H460.4L460.4 93.4H461.4L461.4 91.3H462.4L462.4 91.4H463.4L463.4 90.8H464.4L464.4 91.9H465.4L465.4 90.6H466.4L466.4 101.5H467.4L467.4 87.8H468.4L468.4 86.0H469.4L469.4 84.6H470.4L470.4 82.0H471.4L471.4 84.4H472.4L472.4 82.8H473.4L473.4 80.6H474.4L474.4 83.9H475.4L475.4 96.3H476.4L476.4 125.5H477.4L477.4 151.7H478.4L478.4 176.5H479.4L479.4 181.2H480.4L480.4 182.7H481.4L481.4 185.2H482.4L482.4 186.7H483.4L483.4 187.7H484.4L484.4 185.4H485.4L485.4 178.4H486.4L486.4 178.4H487.4L487.4 185.7H488.4L488.4 186.5H489.4L489.4 184.7H490.4L490.4 189.2H491.4L491.4 183.3H492.4L492.4 180.9H493.4L493.4 183.5H494.4L494.4 179.6H495.4L495.4 179.3H496.4L496.4 175.5H497.4L497.4 174.2H498.4L498.4 181.1H499.4L499.4 185.0H500.4L500.4 189.8H501.4L501.4 202.6H502.4L502.4 193.9H503.4L503.4 196.8H504.4L504.4 194.7H505.4L505.4 196.9H506.4L506.4 197.8H507.4L507.4 197.7H508.4L508.4 200.3H509.4L509.4 198.1H510.4L510.4 201.2H511.4L511.4 198.6H512.4L512.4 201.1H513.4L513.4 200.3H514.4L514.4 197.9H515.4L515.4 198.7H516.4L516.4 199.9H517.4L517.4 201.8H518.4L518.4 198.0H519.4L519.4 201.0H520.4L520.4 213.0H521.4L521.4 199.6H522.4L522.4 202.4H523.4L523.4 201.7H524.4L524.4 131.7H525.4L525.4 131.7H526.4L526.4 217.5H527.4L527.4 203.7H528.4L528.4 203.1H529.4L529.4 202.7H530.4L530.4 201.6H531.4L531.4 201.9H532.4L532.4 201.3H533.4L533.4 201.7H534.4L534.4 201.4H535.4L535.4 202.1H536.4L536.4 202.8H537.4L537.4 211.8H538.4L538.4 201.3H539.4L539.4 201.3H540.4L540.4 202.1H541.4L541.4 203.3H542.4L542.4 204.0H543.4L543.4 216.3H544.4L544.4 200.5H545.4L545.4 200.9H546.4L546.4 200.3H547.4L547.4 202.7H548.4L548.4 201.1H549.4L549.4 202.4H550.4L550.4 210.8H551.4L551.4 202.2H552.4L552.4 201.5H553.4L553.4 200.8H554.4L554.4 204.8H555.4L555.4 201.8H556.4L556.4 202.5H557.4L557.4 200.6H558.4L558.4 201.0H559.4L559.4 200.8H560.4L560.4 200.5H561.4L561.4 200.9H562.4L562.4 201.4H563.4L563.4 197.7H564.4L564.4 196.5H565.4L565.4 196.9H566.4L566.4 196.2H567.4L567.4 198.9H568.4L568.4 197.9H569.4L569.4 194.8H570.4L570.4 188.5H571.4L571.4 185.6H572.4L572.4 182.3H573.4L573.4 178.0H574.4L574.4 177.3H575.4L575.4 178.9H576.4L576.4 184.6H577.4L577.4 183.1H578.4L578.4 187.4H579.4L579.4 182.8H580.4L580.4 185.7H581.4L581.4 186.8H582.4L582.4 185.8H583.4L583.4 188.8H584.4L584.4 187.3H585.4L585.4 189.0H586.4L586.4 186.1H587.4L587.4 184.3H588.4L588.4 186.8H589.4L589.4 183.5H590.4L590.4 185.3H591.4L591.4 187.4H592.4L592.4 188.7H593.4L593.4 188.8H594.4L594.4 184.5H595.4L595.4 182.8H596.4L596.4 178.9H597.4L597.4 175.5H598.4L598.4 171.9H599.4L599.4 180.0H600.4L600.4 180.1H601.4L601.4 186.0H602.4L602.4 185.0H603.4L603.4 185.6H604.4L604.4 184.5H605.4L605.4 185.9H606.4L606.4 188.0H607.4L607.4 187.0H608.4L608.4 187.1H609.4L609.4 186.7H610.4L610.4 187.0H611.4L611.4 188.0H612.4L612.4 187.7H613.4L613.4 187.4H614.4L614.4 188.9H615.4L615.4 189.6H616.4L616.4 187.7H617.4L617.4 188.5H618.4L618.4 188.6H619.4L619.4 186.6H620.4L620.4 186.4H621.4L621.4 187.7H622.4L622.4 189.0H623.4L623.4 69.5H624.4L624.4 69.5H625.4L625.4 189.7H626.4L626.4 188.1H627.4L627.4 188.6H628.4L628.4 185.5H629.4L629.4 190.0H630.4L630.4 187.8H631.4L631.4 186.8H632.4L632.4 186.8H633.4L633.4 189.9H634.4L634.4 188.9H635.4L635.4 194.6H636.4L636.4 186.7H637.4L637.4 187.1H638.4L638.4 185.6H639.4L639.4 196.2H640.4L640.4 186.6H641.4L641.4 186.1H642.4L642.4 185.7H643.4L643.4 183.2H644.4L644.4 188.4H645.4L645.4 184.5H646.4L646.4 182.5H647.4L647.4 182.5H648.4L648.4 174.9H649.4L649.4 178.7H650.4L650.4 186.0H651.4L651.4 199.0H652.4L652.4 188.7H653.4L653.4 185.3H654.4L654.4 186.7H655.4L655.4 188.2H656.4L656.4 185.4H657.4L657.4 188.9H658.4L658.4 186.2H659.4L659.4 188.3H660.4L660.4 187.5H661.4L661.4 183.0H662.4L662.4 185.4H663.4L663.4 186.3H664.4L664.4 197.9H665.4L665.4 183.3H666.4L666.4 181.9H667.4L667.4 178.9H668.4L668.4 178.2H669.4L669.4 174.3H670.4L670.4 173.3H671.4L671.4 171.7H672.4L672.4 180.6H673.4L673.4 186.3H674.4L674.4 192.4H675.4L675.4 213.6H676.4L676.4 202.3H677.4L677.4 205.2H678.4L678.4 204.9H679.4L679.4 205.1H680.4L680.4 206.8H681.4L681.4 218.9H682.4L682.4 209.5H683.4L683.4 208.2H684.4L684.4 211.5H685.4L685.4 212.3H686.4L686.4 208.2H687.4L687.4 211.7H688.4L688.4 210.0H689.4L689.4 212.6H690.4L690.4 208.0H691.4L691.4 210.1H692.4L692.4 209.3H693.4L693.4 210.5H694.4L694.4 211.9H695.4L695.4 209.9H696.4L696.4 209.8H697.4L697.4 215.8H698.4L698.4 192.4H699.4L699.4 192.4H700.4L700.4 211.1H701.4L701.4 212.3H702.4L702.4 212.3H703.4L703.4 215.1H704.4L704.4 211.7H705.4L705.4 210.9H706.4L706.4 219.6H707.4L707.4 222.5H708.4L708.4 213.2H709.4L709.4 208.1H710.4L710.4 209.2H711.4L711.4 209.6H712.4L712.4 210.8H713.4L713.4 210.8H714.4L714.4 207.7H715.4L715.4 212.6H716.4L716.4 210.0H717.4L717.4 212.1H718.4L718.4 224.3H719.4L719.4 213.8H720.4L720.4 153.9H721.4L721.4 153.9H722.4L722.4 207.8H723.4L723.4 210.4H724.4L724.4 220.6H725.4L725.4 209.8H726.4L726.4 208.5H727.4L727.4 210.5H728.4L728.4 209.3H729.4L729.4 205.8H730.4L730.4 208.6H731.4L731.4 214.8H732.4L732.4 206.2H733.4L733.4 220.0H734.4L734.4 205.6H735.4L735.4 205.6H736.4L736.4 201.3H737.4L737.4 204.6H738.4L738.4 204.9H739.4L739.4 202.8H740.4L740.4 201.6H741.4L741.4 199.9H742.4L742.4 196.1H743.4L743.4 194.8H744.4L744.4 194.4H745.4L745.4 188.3H746.4L746.4 187.2H747.4L747.4 187.5H748.4L748.4 185.7H749.4L749.4 189.4H750.4L750.4 191.1H751.4L751.4 191.4H752.4L752.4 192.8H753.4L753.4 192.1H754.4L754.4 194.8H755.4L755.4 194.0H756.4L756.4 193.7H757.4L757.4 162.3H758.4L758.4 162.3H759.4L759.4 194.1H760.4L760.4 198.5H761.4L761.4 195.1H762.4L762.4 197.8H763.4L763.4 199.2H764.4L764.4 192.7H765.4L765.4 189.2H766.4L766.4 157.5H767.4L767.4 123.4H768.4L768.4 97.1H769.4L769.4 84.5H770.4L770.4 80.3H771.4L771.4 74.7H772.4L772.4 79.6H773.4L773.4 82.7H774.4L774.4 82.7H775.4L775.4 83.5H776.4L776.4 84.1H777.4L777.4 85.4H778.4L778.4 84.2H779.4L779.4 97.6H780.4L780.4 87.8H781.4L781.4 84.4H782.4L782.4 86.1H783.4L783.4 90.1H784.4L784.4 83.2H785.4L785.4 85.6H786.4L786.4 95.0H787.4L787.4 87.6H788.4L788.4 86.3H789.4L789.4 96.7H790.4L790.4 87.5H791.4L791.4 87.5H792.4L792.4 90.5H793.4L793.4 89.0H794.4L794.4 89.4H795.4L795.4 88.8H796.4L796.4 39.7H797.4L797.4 39.7H798.4L798.4 90.7H799.4L799.4 89.6H800.4L800.4 91.5H801.4L801.4 90.4H802.4L802.4 92.0H803.4L803.4 90.6H804.4L804.4 92.0H805.4L805.4 89.8H806.4L806.4 87.1H807.4L807.4 100.0H808.4L808.4 89.0H809.4L809.4 91.6H810.4L810.4 90.5H811.4L811.4 93.3H812.4L812.4 91.8H813.4L813.4 91.6H814.4L814.4 88.8H815.4L815.4 90.5H816.4L816.4 91.4H817.4L817.4 94.8H818.4L818.4 89.0H819.4L819.4 89.8H820.4L820.4 88.9H821.4L821.4 91.9H822.4L822.4 89.8H823.4L823.4 90.9H824.4L824.4 91.0H825.4L825.4 90.0H826.4L826.4 90.4H827.4L827.4 90.8H828.4L828.4 89.8H829.4L829.4 90.0H830.4L830.4 92.0H831.4L831.4 90.2H832.4L832.4 90.6H833.4L833.4 86.5H834.4L834.4 88.1H835.4L835.4 86.8H836.4L836.4 86.1H837.4L837.4 85.8H838.4L838.4 84.5H839.4L839.4 84.1H840.4L840.4 83.3H841.4L841.4 84.2H842.4L842.4 83.0H843.4L843.4 82.6H844.4L844.4 84.3H845.4L845.4 79.2H846.4L846.4 77.2H847.4L847.4 75.0H848.4L848.4 90.7H849.4L849.4 114.7H850.4L850.4 124.1H851.4L851.4 152.8H852.4L852.4 165.6H853.4L853.4 174.8H854.4L854.4 178.7H855.4L855.4 179.3H856.4L856.4 177.1H857.4L857.4 177.3H858.4L858.4 180.0H859.4L859.4 179.4H860.4L860.4 178.0H861.4L861.4 179.0H862.4L862.4 177.6H863.4L863.4 182.7H864.4L864.4 178.7H865.4L865.4 178.7H866.4L866.4 179.9H867.4L867.4 180.9H868.4L868.4 181.0H869.4L869.4 180.1H870.4L870.4 180.8H871.4L871.4 182.8H872.4L872.4 181.4H873.4L873.4 178.3H874.4L874.4 180.9H875.4L875.4 178.9H876.4L876.4 179.3H877.4L877.4 177.7H878.4L878.4 180.6H879.4L879.4 178.7H880.4L880.4 180.3H881.4L881.4 181.4H882.4L882.4 183.1H883.4L883.4 180.3H884.4L884.4 179.7H885.4L885.4 179.7H886.4L886.4 178.7H887.4L887.4 180.4H888.4L888.4 182.3H889.4L889.4 180.2H890.4L890.4 182.4H891.4L891.4 193.9H892.4L892.4 179.6H893.4L893.4 180.2H894.4L894.4 178.0H895.4L895.4 140.1H896.4L896.4 140.1H897.4L897.4 178.6H898.4L898.4 180.1H899.4L899.4 178.0H900.4L900.4 178.8H901.4L901.4 179.6H902.4L902.4 178.2H903.4L903.4 179.7H904.4L904.4 181.3H905.4L905.4 190.2H906.4L906.4 179.6H907.4L907.4 178.1H908.4L908.4 178.3H909.4L909.4 178.3H910.4L910.4 176.1H911.4L911.4 178.9H912.4L912.4 176.6H913.4L913.4 179.4H914.4L914.4 177.1H915.4L915.4 179.8H916.4L916.4 175.3H917.4L917.4 177.1H918.4L918.4 176.6H919.4L919.4 178.8H920.4L920.4 180.1H921.4L921.4 177.6H922.4L922.4 176.2H923.4L923.4 179.8H924.4L924.4 174.9H925.4L925.4 177.0H926.4L926.4 177.7H927.4L927.4 178.6H928.4L928.4 174.5H929.4L929.4 181.8H930.4L930.4 174.6H931.4L931.4 175.9H932.4L932.4 175.1H933.4L933.4 175.3H934.4L934.4 180.8H935.4L935.4 182.0H936.4L936.4 174.9H937.4L937.4 177.5H938.4L938.4 177.5H939.4L939.4 174.9H940.4L940.4 172.8H941.4L941.4 172.4H942.4L942.4 170.6H943.4L943.4 170.6H944.4L944.4 165.9H945.4L945.4 165.0H946.4L946.4 163.4H947.4L947.4 171.4H948.4L948.4 171.3H949.4L949.4 180.7H950.4L950.4 208.4H951.4L951.4 202.6H952.4L952.4 210.0H953.4L953.4 210.8H954.4L954.4 212.0H955.4L955.4 212.1H956.4L956.4 214.5H957.4L957.4 214.0H958.4L958.4 215.1H959.4L959.4 215.3H960.4L960.4 215.5H961.4L961.4 214.1H962.4L962.4 214.0H963.4L963.4 216.1H964.4L964.4 217.5H965.4L965.4 216.2H966.4L966.4 213.1H967.4L967.4 215.9H968.4L968.4 217.3H969.4L969.4 216.7H970.4L970.4 216.3H971.4L971.4 164.3H972.4L972.4 164.3H973.4L973.4 216.3H974.4L974.4 214.5H975.4L975.4 216.0H976.4L976.4 231.8H977.4L977.4 218.2H978.4L978.4 215.9H979.4L979.4 219.0H980.4L980.4 216.8H981.4L981.4 216.8H982.4L982.4 217.3H983.4L983.4 214.5H984.4L984.4 218.0H985.4L985.4 218.6H986.4L986.4 217.6H987.4L987.4 215.8H988.4L988.4 217.4H989.4L989.4 219.1H990.4L990.4 216.6H991.4L991.4 218.4H992.4L992.4 218.1H993.4L993.4 219.0H994.4L994.4 218.6H995.4L995.4 217.4H996.4L996.4 218.2H997.4L997.4 216.1H998.4L998.4 216.4H999.4L999.4 216.8H1000.4L1000.4 220.9H1001.4L1001.4 229.4H1002.4L1002.4 216.2H1003.4L1003.4 213.8H1004.4L1004.4 219.7H1005.4L1005.4 217.2H1006.4L1006.4 218.6H1007.4L1007.4 214.8H1008.4L1008.4 215.3H1009.4L1009.4 215.9H1010.4L1010.4 216.2H1011.4L1011.4 217.5H1012.4L1012.4 210.5H1013.4L1013.4 207.6H1014.4L1014.4 197.4H1015.4L1015.4 175.5H1016.4L1016.4 141.4H1017.4L1017.4 107.4H1018.4L1018.4 90.1H1019.4L1019.4 79.8H1020.4L1020.4 73.8H1021.4L1021.4 71.4H1022.4L1022.4 75.5H1023.4L1023.4 79.0H1024.4L1024.4 78.2H1025.4L1025.4 79.3H1026.4L1026.4 77.9H1027.4L1027.4 84.4H1028.4L1028.4 87.8H1029.4L1029.4 80.7H1030.4L1030.4 80.6H1031.4L1031.4 82.1H1032.4L1032.4 80.7H1033.4L1033.4 84.8H1034.4L1034.4 81.9H1035.4L1035.4 81.9H1036.4L1036.4 83.6H1037.4L1037.4 85.0H1038.4L1038.4 82.8H1039.4L1039.4 82.6H1040.4L1040.4 86.6H1041.4L1041.4 84.2H1042.4L1042.4 85.3H1043.4L1043.4 88.4H1044.4L1044.4 86.0H1045.4L1045.4 86.2H1046.4L1046.4 89.6H1047.4L1047.4 89.5H1048.4L1048.4 89.1H1049.4L1049.4 90.5H1050.4L1050.4 90.3H1051.4L1051.4 89.0H1052.4L1052.4 88.0H1053.4L1053.4 89.1H1054.4L1054.4 87.7H1055.4L1055.4 88.7H1056.4L1056.4 89.8H1057.4L1057.4 89.6H1058.4L1058.4 87.9H1059.4L1059.4 92.5H1060.4L1060.4 94.4H1061.4L1061.4 93.1H1062.4L1062.4 91.0H1063.4L1063.4 91.5H1064.4L1064.4 93.2H1065.4L1065.4 91.9H1066.4L1066.4 91.8H1067.4L1067.4 89.9H1068.4L1068.4 91.3H1069.4L1069.4 93.6H1070.4L1070.4 20.0H1071.4L1071.4 20.0H1072.4L1072.4 92.6H1073.4L1073.4 91.2H1074.4L1074.4 92.0H1075.4L1075.4 92.5H1076.4L1076.4 91.7H1077.4L1077.4 94.2H1078.4L1078.4 91.2H1079.4L1079.4 95.3H1080.4L1080.4 89.4H1081.4L1081.4 103.6H1082.4L1082.4 93.2H1083.4L1083.4 90.4H1084.4L1084.4 95.0H1085.4L1085.4 90.4H1086.4L1086.4 95.0H1087.4L1087.4 92.0H1088.4L1088.4 94.0H1089.4L1089.4 91.5H1090.4L1090.4 91.4H1091.4L1091.4 90.6H1092.4L1092.4 89.5H1093.4L1093.4 94.1H1094.4L1094.4 84.0H1095.4L1095.4 84.7H1096.4L1096.4 81.0H1097.4L1097.4 83.0H1098.4L1098.4 92.4H1099.4L1099.4 110.4H1100.4L1100.4 137.6H1101.4L1101.4 169.7H1102.4L1102.4 202.8H1103.4L1103.4 234.3H1104.4L1104.4 232.5H1105.4L1105.4 230.8H1106.4L1106.4 233.2H1107.4L1107.4 192.2H1108.4L1108.4 192.2H1109.4L1109.4 236.6H1110.4L1110.4 234.9H1111.4L1111.4 237.5H1112.4L1112.4 235.4H1113.4L1113.4 237.9H1114.4L1114.4 237.9H1115.4L1115.4 240.3H1116.4L1116.4 243.8H1117.4L1117.4 241.2H1118.4L1118.4 243.9H1119.4L1119.4 240.4H1120.4L1120.4 234.2H1121.4L1121.4 234.5H1122.4L1122.4 239.9H1123.4L1123.4 244.0H1124.4L1124.4 241.8H1125.4L1125.4 247.5H1126.4L1126.4 247.6H1127.4L1127.4 246.2H1128.4L1128.4 248.1H1129.4L1129.4 250.1H1130.4L1130.4 260.1H1131.4L1131.4 254.4H1132.4L1132.4 255.2H1133.4L1133.4 253.9H1134.4L1134.4 258.4H1135.4L1135.4 260.5H1136.4L1136.4 257.3H1137.4L1137.4 263.0H1138.4L1138.4 264.1H1139.4L1139.4 262.3H1140.4L1140.4 264.0H1141.4L1141.4 262.1H1142.4L1142.4 261.9H1143.4L1143.4 265.6H1144.4L1144.4 267.2H1145.4L1145.4 271.3H1146.4L1146.4 217.8H1147.4L1147.4 217.8H1148.4L1148.4 270.3H1149.4L1149.4 274.4H1150.4L1150.4 277.1H1151.4L1151.4 280.1H1152.4L1152.4 276.4H1153.4L1153.4 278.3H1154.4L1154.4 278.4H1155.4L1155.4 280.5H1156.4L1156.4 284.0H1157.4L1157.4 284.8H1158.4L1158.4 288.0H1159.4L1159.4 295.3H1160.4L1160.4 290.9H1161.4L1161.4 289.7H1162.4L1162.4 294.8H1163.4L1163.4 297.0H1164.4L1164.4 298.5H1165.4L1165.4 297.8H1166.4L1166.4 302.0H1167.4V312z" fill="#fff070" stroke="none"/><rect x="0" y="311" width="1197" height="1" fill="#8a8450"/><g shape-rendering="auto"><path d="M1155 21.5H1182.5V5.5" fill="none" stroke="#b4a6a6" stroke-width="1"/><polyline points="1156,17 1166.3,8.3 1176.6,17 1180.9,13.3" fill="none" stroke="#fff27a" stroke-width="1.6"/><path d="M1155 42.5H1182.5V26.5" fill="none" stroke="#b4a6a6" stroke-width="1"/><polyline points="1156,38.1 1164.2,29.4 1172.5,38.1 1180.8,29.4" fill="none" stroke="#f46464" stroke-width="1.25"/><path d="M1155 63.5H1182.5V47.5" fill="none" stroke="#b4a6a6" stroke-width="1"/><polyline points="1156,59.1 1164.2,50.4 1172.5,59.1 1180.8,50.4" fill="none" stroke="#44ec44" stroke-width="1.25"/><path d="M1155 84.5H1182.5V68.5" fill="none" stroke="#b4a6a6" stroke-width="1"/><polyline points="1156,80.1 1164.2,71.4 1172.5,80.1 1180.8,71.4" fill="none" stroke="#80c0f8" stroke-width="1.25"/></g></svg>
<svg style="left:0;top:0" width="1730" height="887" viewBox="0 0 1730 887"><path d="M490 54.5H494M490 74.5H494M490 94.5H494M490 114.5H494M490 135.5H494M490 155.5H494M490 175.5H494M490 195.5H494M490 216.5H494M490 236.5H494M490 256.5H494M490 276.5H494M490 297.5H494M490 317.5H494M490 337.5H494M496.5 340V345M556.5 340V345M615.5 340V345M675.5 340V345M734.5 340V345M794.5 340V345M853.5 340V345M913.5 340V345M972.5 340V345M1032.5 340V345M1091.5 340V345M1151.5 340V345M1210.5 340V345M1270.5 340V345M1329.5 340V345M1389.5 340V345M1448.5 340V345M1508.5 340V345M1568.5 340V345M1627.5 340V345M1687.5 340V345M485 438.5H490M485 466.5H490M485 494.5H490M485 522.5H490M485 550.5H490M485 578.5H490M485 606.5H490M485 635.5H490M485 663.5H490M485 691.5H490M485 719.5H490M485 747.5H490M492.5 750V755M529.5 750V755M566.5 750V755M604.5 750V755M641.5 750V755M678.5 750V755M716.5 750V755M753.5 750V755M790.5 750V755M828.5 750V755M865.5 750V755M902.5 750V755M940.5 750V755M977.5 750V755M1014.5 750V755M1051.5 750V755M1089.5 750V755M1126.5 750V755M1163.5 750V755M1201.5 750V755M1238.5 750V755M1275.5 750V755M1313.5 750V755M1350.5 750V755M1387.5 750V755M1425.5 750V755M1462.5 750V755M1499.5 750V755M1536.5 750V755M1574.5 750V755M1611.5 750V755M1648.5 750V755M1686.5 750V755" stroke="#000" stroke-width="1" fill="none" shape-rendering="crispEdges"/></svg>
<div style="left:429.5px;top:385px;width:19px;height:15.5px;box-sizing:border-box;background:#d3d3cf;border-top:1px solid #ecece8;border-left:1px solid #ecece8;border-right:1px solid #8e8e8c;border-bottom:1px solid #8a8a88"></div>
<svg style="left:430px;top:385px" width="19" height="16" viewBox="0 0 19 16"><rect x="2.2" y="3" width="2.8" height="3" fill="#5a644e"/><path d="M9.5 2.4V15M3.4 8.5H16" stroke="#000" stroke-width="1" fill="none" shape-rendering="crispEdges"/><circle cx="9.5" cy="8.5" r="1.5" fill="#fff" stroke="#000" stroke-width="0.9"/></svg>
<div style="left:450px;top:385px;width:19.5px;height:15.5px;box-sizing:border-box;background:linear-gradient(to right,#6e6e6c,#8a8a88 60%,#7e7e7c);border-top:1px solid #5c5c5a;border-left:1px solid #5c5c5a;border-right:1px solid #9c9c98;border-bottom:1px solid #6a6a68"></div>
<svg style="left:450px;top:385px" width="19" height="16" viewBox="0 0 19 16"><rect x="2.2" y="3" width="2.8" height="3" fill="#86d25a"/><path d="M9 10.4L4.4 14.6" stroke="#000" stroke-width="2.1"/><path d="M8.5 10.9L5 14.1" stroke="#e8e8e8" stroke-width="0.7" stroke-dasharray="1 0.8"/><circle cx="12.5" cy="6.5" r="3.5" fill="#fff" stroke="#1a1a1a" stroke-width="1"/><path d="M10 6.5h5M12.5 4v5" stroke="#0c0c5c" stroke-width="1" shape-rendering="crispEdges"/><path d="M11.9 12.5h4.8l-2.4 2.4z" fill="#000"/></svg>
<div style="left:471.5px;top:385px;width:19px;height:15.5px;box-sizing:border-box;background:#d3d3cf;border-top:1px solid #ecece8;border-left:1px solid #ecece8;border-right:1px solid #8e8e8c;border-bottom:1px solid #8a8a88"></div>
<svg style="left:472px;top:385px" width="19" height="16" viewBox="0 0 19 16"><rect x="2.2" y="3" width="2.8" height="3" fill="#5a644e"/><path d="M4 8.6L6.2 10.2 7.4 9.4V3.9L8.3 3 9.2 3.9V3L10.2 2.1 11.1 3V3.9L12.2 3 13.2 3.9V5.8L14.2 5.1 15.4 6.9V10.5L13.4 14.2H7L4 9.8z" stroke="#000" stroke-width="1" fill="#e6e6e2" stroke-linejoin="round"/><path d="M9.3 4v4.6M11.2 4v4.6M13.2 5.8v3" stroke="#000" stroke-width="0.9" fill="none"/></svg>
<div style="left:429.5px;top:795px;width:19px;height:15.5px;box-sizing:border-box;background:linear-gradient(to right,#6e6e6c,#8a8a88 60%,#7e7e7c);border-top:1px solid #5c5c5a;border-left:1px solid #5c5c5a;border-right:1px solid #9c9c98;border-bottom:1px solid #6a6a68"></div>
<svg style="left:430px;top:795px" width="19" height="16" viewBox="0 0 19 16"><rect x="2.2" y="3" width="2.8" height="3" fill="#86d25a"/><path d="M9.5 2.4V15M3.4 8.5H16" stroke="#000" stroke-width="1" fill="none" shape-rendering="crispEdges"/><circle cx="9.5" cy="8.5" r="1.5" fill="#fff" stroke="#000" stroke-width="0.9"/></svg>
<div style="left:450px;top:795px;width:19.5px;height:15.5px;box-sizing:border-box;background:#d3d3cf;border-top:1px solid #ecece8;border-left:1px solid #ecece8;border-right:1px solid #8e8e8c;border-bottom:1px solid #8a8a88"></div>
<svg style="left:450px;top:795px" width="19" height="16" viewBox="0 0 19 16"><rect x="2.2" y="3" width="2.8" height="3" fill="#5a644e"/><path d="M9 10.4L4.4 14.6" stroke="#000" stroke-width="2.1"/><path d="M8.5 10.9L5 14.1" stroke="#e8e8e8" stroke-width="0.7" stroke-dasharray="1 0.8"/><circle cx="12.5" cy="6.5" r="3.5" fill="#fff" stroke="#1a1a1a" stroke-width="1"/><path d="M10 6.5h5M12.5 4v5" stroke="#0c0c5c" stroke-width="1" shape-rendering="crispEdges"/><path d="M11.9 12.5h4.8l-2.4 2.4z" fill="#000"/></svg>
<div style="left:471.5px;top:795px;width:19px;height:15.5px;box-sizing:border-box;background:#d3d3cf;border-top:1px solid #ecece8;border-left:1px solid #ecece8;border-right:1px solid #8e8e8c;border-bottom:1px solid #8a8a88"></div>
<svg style="left:472px;top:795px" width="19" height="16" viewBox="0 0 19 16"><rect x="2.2" y="3" width="2.8" height="3" fill="#5a644e"/><path d="M4 8.6L6.2 10.2 7.4 9.4V3.9L8.3 3 9.2 3.9V3L10.2 2.1 11.1 3V3.9L12.2 3 13.2 3.9V5.8L14.2 5.1 15.4 6.9V10.5L13.4 14.2H7L4 9.8z" stroke="#000" stroke-width="1" fill="#e6e6e2" stroke-linejoin="round"/><path d="M9.3 4v4.6M11.2 4v4.6M13.2 5.8v3" stroke="#000" stroke-width="0.9" fill="none"/></svg>
<svg style="left:1564px;top:404px" width="11" height="23" viewBox="0 0 11 23"><defs><linearGradient id="sp1564" x1="0" x2="1" y1="0" y2="0"><stop offset="0" stop-color="#c4c6cc"/><stop offset="0.25" stop-color="#ececec"/><stop offset="0.6" stop-color="#d0d0d0"/><stop offset="1" stop-color="#84868e"/></linearGradient></defs><rect x="0.3" y="0.3" width="10.4" height="22.4" rx="5.2" ry="8.5" fill="url(#sp1564)" stroke="#a4a8b6" stroke-width="0.6"/><path d="M2 11.5H9" stroke="#8c8c8c" stroke-width="0.9"/><path d="M5.5 5.5l1.9 3.2h-3.8z M5.5 17.5l1.9 -3.2h-3.8z" fill="#747474"/></svg>
<div class="fld2" style="left:1576px;top:406px;width:128px;height:14.5px"></div>
<div class="gbtn" style="left:1641px;top:833px;width:70px;height:39px"></div>
<span class="t" style="font-size:11.5px;color:#000;left:50.60px;top:77.17px;transform:scaleX(0.8905);">ACQUIRE DATA</span>
<span class="t" style="font-size:11.5px;color:#000;left:71.30px;top:106.17px;transform:scaleX(0.8928);">ACQUIRE DATA</span>
<span class="t" style="font-size:11.5px;color:#000;left:247.28px;top:80.17px;transform:scaleX(0.9313);">Continues ACQ</span>
<span class="t" style="font-size:11.5px;color:#0b4f0b;left:269.97px;top:105.87px;transform:scaleX(0.9486);">Continues</span>
<span class="t" style="font-size:11.5px;color:#000;left:67.70px;top:139.67px;transform:scaleX(0.9150);">Source1</span>
<span class="t" style="font-size:11.5px;color:#000;left:247.10px;top:140.87px;transform:scaleX(0.9290);">Source2</span>
<span class="t" style="font-size:14.5px;color:#000;-webkit-text-stroke:0.4px #000;left:32.19px;top:159.33px;transform:scaleX(1.1082);">Resource Name 1</span>
<span class="t" style="font-size:14.5px;color:#000;-webkit-text-stroke:0.4px #000;left:33.70px;top:204.43px;transform:scaleX(1.1482);">Frequency (Hz) 1</span>
<span class="t" style="font-size:14.5px;color:#000;-webkit-text-stroke:0.4px #000;left:33.69px;top:252.23px;transform:scaleX(1.1663);">Power Level (dBm) 1</span>
<span class="t" style="font-size:14.5px;color:#000;-webkit-text-stroke:0.4px #000;left:30.99px;top:300.03px;transform:scaleX(1.1580);">Modulation Type 1</span>
<span class="t" style="font-size:14.5px;color:#000;-webkit-text-stroke:0.4px #000;left:30.99px;top:348.43px;transform:scaleX(1.1221);">Mod. Wfm Type 1</span>
<span class="t" style="font-size:14.5px;color:#000;-webkit-text-stroke:0.4px #000;left:30.99px;top:396.13px;transform:scaleX(1.1260);">Mod. Wfm Freq 1</span>
<span class="t" style="font-size:14.5px;color:#000;-webkit-text-stroke:0.4px #000;left:30.99px;top:445.03px;transform:scaleX(1.1504);">PM Deviation 1</span>
<span class="t" style="font-size:14.5px;color:#000;-webkit-text-stroke:0.4px #000;left:30.99px;top:493.43px;transform:scaleX(1.1373);">FM Deviation 1</span>
<span class="t" style="font-size:14.5px;color:#000;-webkit-text-stroke:0.4px #000;left:30.99px;top:544.13px;transform:scaleX(1.1033);">Channel Enable 1</span>
<span class="t" style="font-size:14.5px;color:#000;-webkit-text-stroke:0.4px #000;left:45.60px;top:180.33px;transform:scaleX(1.2047);">PXI1Slot8</span>
<span class="t" style="font-size:14.5px;color:#000;-webkit-text-stroke:0.4px #000;left:34.88px;top:229.23px;transform:scaleX(1.2351);">255.000000M</span>
<span class="t" style="font-size:14.5px;color:#000;-webkit-text-stroke:0.4px #000;left:34.88px;top:277.13px;transform:scaleX(1.2653);">-20.00</span>
<span class="t" style="font-size:14.5px;color:#000;-webkit-text-stroke:0.4px #000;left:35.68px;top:324.23px;transform:scaleX(1.1329);">FM</span>
<span class="t" style="font-size:14.5px;color:#000;-webkit-text-stroke:0.4px #000;left:35.69px;top:372.13px;transform:scaleX(1.1657);">Sine</span>
<span class="t" style="font-size:14.5px;color:#000;-webkit-text-stroke:0.4px #000;left:38.29px;top:419.83px;transform:scaleX(1.2139);">10.000000k</span>
<span class="t" style="font-size:14.5px;color:#000;-webkit-text-stroke:0.4px #000;left:35.69px;top:469.23px;transform:scaleX(1.2465);">3000</span>
<span class="t" style="font-size:14.5px;color:#000;-webkit-text-stroke:0.4px #000;left:37.78px;top:517.13px;transform:scaleX(1.1772);">1E+6</span>
<span class="t" style="font-size:14.5px;color:#063a06;-webkit-text-stroke:0.4px #063a06;left:84.74px;top:566.03px;transform:scaleX(1.1660);">ON</span>
<span class="t" style="font-size:14.5px;color:#000;-webkit-text-stroke:0.4px #000;left:212.19px;top:159.33px;transform:scaleX(1.1254);">Resource Name 2</span>
<span class="t" style="font-size:14.5px;color:#000;-webkit-text-stroke:0.4px #000;left:213.70px;top:204.43px;transform:scaleX(1.1562);">Frequency (Hz) 2</span>
<span class="t" style="font-size:14.5px;color:#000;-webkit-text-stroke:0.4px #000;left:213.70px;top:252.23px;transform:scaleX(1.1611);">Power Level (dBm) 2</span>
<span class="t" style="font-size:14.5px;color:#000;-webkit-text-stroke:0.4px #000;left:210.99px;top:300.03px;transform:scaleX(1.1673);">Modulation Type 2</span>
<span class="t" style="font-size:14.5px;color:#000;-webkit-text-stroke:0.4px #000;left:210.98px;top:348.43px;transform:scaleX(1.1443);">Mod. Wfm Type 2</span>
<span class="t" style="font-size:14.5px;color:#000;-webkit-text-stroke:0.4px #000;left:210.99px;top:396.13px;transform:scaleX(1.1314);">Mod. Wfm Freq 2</span>
<span class="t" style="font-size:14.5px;color:#000;-webkit-text-stroke:0.4px #000;left:210.99px;top:445.03px;transform:scaleX(1.1606);">PM Deviation 2</span>
<span class="t" style="font-size:14.5px;color:#000;-webkit-text-stroke:0.4px #000;left:210.99px;top:493.43px;transform:scaleX(1.1600);">FM Deviation 2</span>
<span class="t" style="font-size:14.5px;color:#000;-webkit-text-stroke:0.4px #000;left:210.99px;top:544.13px;transform:scaleX(1.1164);">Channel Enable 2</span>
<span class="t" style="font-size:14.5px;color:#000;-webkit-text-stroke:0.4px #000;left:225.40px;top:180.33px;transform:scaleX(1.2047);">PXI1Slot7</span>
<span class="t" style="font-size:14.5px;color:#000;-webkit-text-stroke:0.4px #000;left:214.88px;top:229.23px;transform:scaleX(1.2372);">638.000000M</span>
<span class="t" style="font-size:14.5px;color:#000;-webkit-text-stroke:0.4px #000;left:214.88px;top:277.13px;transform:scaleX(1.2453);">-15.00</span>
<span class="t" style="font-size:14.5px;color:#000;-webkit-text-stroke:0.4px #000;left:215.70px;top:324.23px;transform:scaleX(1.1462);">None</span>
<span class="t" style="font-size:14.5px;color:#000;-webkit-text-stroke:0.4px #000;left:215.69px;top:372.13px;transform:scaleX(1.1657);">Sine</span>
<span class="t" style="font-size:14.5px;color:#000;-webkit-text-stroke:0.4px #000;left:215.99px;top:419.83px;transform:scaleX(1.2403);">20.000000k</span>
<span class="t" style="font-size:14.5px;color:#000;-webkit-text-stroke:0.4px #000;left:215.69px;top:469.23px;transform:scaleX(1.2560);">2000</span>
<span class="t" style="font-size:14.5px;color:#000;-webkit-text-stroke:0.4px #000;left:217.78px;top:517.13px;transform:scaleX(1.1772);">1E+6</span>
<span class="t" style="font-size:14.5px;color:#063a06;-webkit-text-stroke:0.4px #063a06;left:264.13px;top:566.03px;transform:scaleX(1.1660);">ON</span>
<span class="t" style="font-size:11.5px;color:#000;left:125.54px;top:713.07px;transform:scaleX(0.9481);">Save</span>
<span class="t" style="font-size:11.5px;color:#000;left:167.95px;top:741.87px;transform:scaleX(0.9242);">Save</span>
<span class="t" style="font-size:11.5px;color:#000;left:253.29px;top:729.07px;transform:scaleX(0.9111);">Samples to Save</span>
<span class="t" style="font-size:11.5px;color:#000;left:258.46px;top:747.37px;transform:scaleX(0.9638);">1000</span>
<span class="t" style="font-size:11.5px;color:#000;left:422.95px;top:30.07px;transform:scaleX(0.9507);">DATA</span>
<span class="t" style="font-size:11.5px;color:#000;left:422.53px;top:414.07px;transform:scaleX(0.8593);">FFT</span>
<span class="t" style="font-size:11.5px;color:#000;left:465.25px;top:49.57px;transform:scaleX(0.9400);">1.75</span>
<span class="t" style="font-size:11.5px;color:#000;left:471.26px;top:69.57px;transform:scaleX(0.9400);">1.5</span>
<span class="t" style="font-size:11.5px;color:#000;left:465.25px;top:89.57px;transform:scaleX(0.9400);">1.25</span>
<span class="t" style="font-size:11.5px;color:#000;left:480.28px;top:109.57px;transform:scaleX(0.9400);">1</span>
<span class="t" style="font-size:11.5px;color:#000;left:465.25px;top:130.57px;transform:scaleX(0.9400);">0.75</span>
<span class="t" style="font-size:11.5px;color:#000;left:471.26px;top:150.57px;transform:scaleX(0.9400);">0.5</span>
<span class="t" style="font-size:11.5px;color:#000;left:465.25px;top:170.57px;transform:scaleX(0.9400);">0.25</span>
<span class="t" style="font-size:11.5px;color:#000;left:480.28px;top:190.57px;transform:scaleX(0.9400);">0</span>
<span class="t" style="font-size:11.5px;color:#000;left:461.65px;top:211.57px;transform:scaleX(0.9400);">-0.25</span>
<span class="t" style="font-size:11.5px;color:#000;left:467.66px;top:231.57px;transform:scaleX(0.9400);">-0.5</span>
<span class="t" style="font-size:11.5px;color:#000;left:461.65px;top:251.57px;transform:scaleX(0.9400);">-0.75</span>
<span class="t" style="font-size:11.5px;color:#000;left:476.68px;top:271.57px;transform:scaleX(0.9400);">-1</span>
<span class="t" style="font-size:11.5px;color:#000;left:461.65px;top:292.57px;transform:scaleX(0.9400);">-1.25</span>
<span class="t" style="font-size:11.5px;color:#000;left:467.66px;top:312.57px;transform:scaleX(0.9400);">-1.5</span>
<span class="t" style="font-size:11.5px;color:#000;left:461.65px;top:332.57px;transform:scaleX(0.9400);">-1.75</span>
<span class="t" style="font-size:11.5px;color:#000;left:481.50px;top:346.97px;transform:scaleX(0.9380);">10000</span>
<span class="t" style="font-size:11.5px;color:#000;left:541.50px;top:346.97px;transform:scaleX(0.9380);">10010</span>
<span class="t" style="font-size:11.5px;color:#000;left:600.50px;top:346.97px;transform:scaleX(0.9380);">10020</span>
<span class="t" style="font-size:11.5px;color:#000;left:660.50px;top:346.97px;transform:scaleX(0.9380);">10030</span>
<span class="t" style="font-size:11.5px;color:#000;left:719.50px;top:346.97px;transform:scaleX(0.9380);">10040</span>
<span class="t" style="font-size:11.5px;color:#000;left:779.50px;top:346.97px;transform:scaleX(0.9380);">10050</span>
<span class="t" style="font-size:11.5px;color:#000;left:838.50px;top:346.97px;transform:scaleX(0.9380);">10060</span>
<span class="t" style="font-size:11.5px;color:#000;left:898.50px;top:346.97px;transform:scaleX(0.9380);">10070</span>
<span class="t" style="font-size:11.5px;color:#000;left:957.50px;top:346.97px;transform:scaleX(0.9380);">10080</span>
<span class="t" style="font-size:11.5px;color:#000;left:1017.50px;top:346.97px;transform:scaleX(0.9380);">10090</span>
<span class="t" style="font-size:11.5px;color:#000;left:1076.50px;top:346.97px;transform:scaleX(0.9380);">10100</span>
<span class="t" style="font-size:11.5px;color:#000;left:1136.50px;top:346.97px;transform:scaleX(0.9634);">10110</span>
<span class="t" style="font-size:11.5px;color:#000;left:1195.50px;top:346.97px;transform:scaleX(0.9380);">10120</span>
<span class="t" style="font-size:11.5px;color:#000;left:1255.50px;top:346.97px;transform:scaleX(0.9380);">10130</span>
<span class="t" style="font-size:11.5px;color:#000;left:1314.50px;top:346.97px;transform:scaleX(0.9380);">10140</span>
<span class="t" style="font-size:11.5px;color:#000;left:1374.50px;top:346.97px;transform:scaleX(0.9380);">10150</span>
<span class="t" style="font-size:11.5px;color:#000;left:1433.50px;top:346.97px;transform:scaleX(0.9380);">10160</span>
<span class="t" style="font-size:11.5px;color:#000;left:1493.50px;top:346.97px;transform:scaleX(0.9380);">10170</span>
<span class="t" style="font-size:11.5px;color:#000;left:1553.50px;top:346.97px;transform:scaleX(0.9380);">10180</span>
<span class="t" style="font-size:11.5px;color:#000;left:1612.50px;top:346.97px;transform:scaleX(0.9380);">10190</span>
<span class="t" style="font-size:11.5px;color:#000;left:1672.50px;top:346.97px;transform:scaleX(0.9380);">10200</span>
<span class="t" style="font-size:11.5px;color:#000;left:455.90px;top:195.90px;transform:rotate(-90deg) scaleX(0.9151) translate(-25.57px,-9.73px);">Amplitude</span>
<span class="t" style="font-size:11.5px;color:#000;left:1030.29px;top:361.77px;transform:scaleX(0.9489);">Samples[100k out of 1M]</span>
<span class="t" style="font-size:11.5px;color:#000;left:467.17px;top:433.57px;transform:scaleX(0.9400);">-10</span>
<span class="t" style="font-size:11.5px;color:#000;left:467.17px;top:461.57px;transform:scaleX(0.9400);">-20</span>
<span class="t" style="font-size:11.5px;color:#000;left:467.17px;top:489.57px;transform:scaleX(0.9400);">-30</span>
<span class="t" style="font-size:11.5px;color:#000;left:467.17px;top:517.57px;transform:scaleX(0.9400);">-40</span>
<span class="t" style="font-size:11.5px;color:#000;left:467.17px;top:545.57px;transform:scaleX(0.9400);">-50</span>
<span class="t" style="font-size:11.5px;color:#000;left:467.17px;top:573.57px;transform:scaleX(0.9400);">-60</span>
<span class="t" style="font-size:11.5px;color:#000;left:467.17px;top:601.57px;transform:scaleX(0.9400);">-70</span>
<span class="t" style="font-size:11.5px;color:#000;left:467.17px;top:630.57px;transform:scaleX(0.9400);">-80</span>
<span class="t" style="font-size:11.5px;color:#000;left:467.17px;top:658.57px;transform:scaleX(0.9400);">-90</span>
<span class="t" style="font-size:11.5px;color:#000;left:461.15px;top:686.57px;transform:scaleX(0.9400);">-100</span>
<span class="t" style="font-size:11.5px;color:#000;left:461.96px;top:714.57px;transform:scaleX(0.9400);">-110</span>
<span class="t" style="font-size:11.5px;color:#000;left:461.15px;top:742.57px;transform:scaleX(0.9400);">-120</span>
<span class="t" style="font-size:11.5px;color:#000;left:489.15px;top:756.97px;transform:scaleX(1.0459);">0</span>
<span class="t" style="font-size:11.5px;color:#000;left:522.30px;top:756.97px;transform:scaleX(0.9009);">1M</span>
<span class="t" style="font-size:11.5px;color:#000;left:559.30px;top:756.97px;transform:scaleX(0.9009);">2M</span>
<span class="t" style="font-size:11.5px;color:#000;left:597.30px;top:756.97px;transform:scaleX(0.9009);">3M</span>
<span class="t" style="font-size:11.5px;color:#000;left:634.30px;top:756.97px;transform:scaleX(0.9009);">4M</span>
<span class="t" style="font-size:11.5px;color:#000;left:671.30px;top:756.97px;transform:scaleX(0.9009);">5M</span>
<span class="t" style="font-size:11.5px;color:#000;left:709.30px;top:756.97px;transform:scaleX(0.9009);">6M</span>
<span class="t" style="font-size:11.5px;color:#000;left:746.30px;top:756.97px;transform:scaleX(0.9009);">7M</span>
<span class="t" style="font-size:11.5px;color:#000;left:783.30px;top:756.97px;transform:scaleX(0.9009);">8M</span>
<span class="t" style="font-size:11.5px;color:#000;left:821.30px;top:756.97px;transform:scaleX(0.9009);">9M</span>
<span class="t" style="font-size:11.5px;color:#000;left:855.50px;top:756.97px;transform:scaleX(0.8939);">10M</span>
<span class="t" style="font-size:11.5px;color:#000;left:892.50px;top:756.97px;transform:scaleX(0.9289);">11M</span>
<span class="t" style="font-size:11.5px;color:#000;left:930.50px;top:756.97px;transform:scaleX(0.8939);">12M</span>
<span class="t" style="font-size:11.5px;color:#000;left:967.50px;top:756.97px;transform:scaleX(0.8939);">13M</span>
<span class="t" style="font-size:11.5px;color:#000;left:1004.50px;top:756.97px;transform:scaleX(0.8939);">14M</span>
<span class="t" style="font-size:11.5px;color:#000;left:1041.50px;top:756.97px;transform:scaleX(0.8939);">15M</span>
<span class="t" style="font-size:11.5px;color:#000;left:1079.50px;top:756.97px;transform:scaleX(0.8939);">16M</span>
<span class="t" style="font-size:11.5px;color:#000;left:1116.50px;top:756.97px;transform:scaleX(0.8939);">17M</span>
<span class="t" style="font-size:11.5px;color:#000;left:1153.50px;top:756.97px;transform:scaleX(0.8939);">18M</span>
<span class="t" style="font-size:11.5px;color:#000;left:1191.50px;top:756.97px;transform:scaleX(0.8939);">19M</span>
<span class="t" style="font-size:11.5px;color:#000;left:1228.50px;top:756.97px;transform:scaleX(0.8939);">20M</span>
<span class="t" style="font-size:11.5px;color:#000;left:1265.50px;top:756.97px;transform:scaleX(0.8939);">21M</span>
<span class="t" style="font-size:11.5px;color:#000;left:1303.50px;top:756.97px;transform:scaleX(0.8939);">22M</span>
<span class="t" style="font-size:11.5px;color:#000;left:1340.50px;top:756.97px;transform:scaleX(0.8939);">23M</span>
<span class="t" style="font-size:11.5px;color:#000;left:1377.50px;top:756.97px;transform:scaleX(0.8939);">24M</span>
<span class="t" style="font-size:11.5px;color:#000;left:1415.50px;top:756.97px;transform:scaleX(0.8939);">25M</span>
<span class="t" style="font-size:11.5px;color:#000;left:1452.50px;top:756.97px;transform:scaleX(0.8939);">26M</span>
<span class="t" style="font-size:11.5px;color:#000;left:1489.50px;top:756.97px;transform:scaleX(0.8939);">27M</span>
<span class="t" style="font-size:11.5px;color:#000;left:1526.50px;top:756.97px;transform:scaleX(0.8939);">28M</span>
<span class="t" style="font-size:11.5px;color:#000;left:1564.50px;top:756.97px;transform:scaleX(0.8939);">29M</span>
<span class="t" style="font-size:11.5px;color:#000;left:1601.50px;top:756.97px;transform:scaleX(0.8939);">30M</span>
<span class="t" style="font-size:11.5px;color:#000;left:1638.50px;top:756.97px;transform:scaleX(0.8939);">31M</span>
<span class="t" style="font-size:11.5px;color:#000;left:1676.50px;top:756.97px;transform:scaleX(0.8939);">32M</span>
<span class="t" style="font-size:11.5px;color:#000;left:456.00px;top:593.00px;transform:rotate(-90deg) scaleX(0.8652) translate(-24.62px,-9.73px);">Signal dB</span>
<span class="t" style="font-size:11.5px;color:#000;left:1077.20px;top:771.77px;transform:scaleX(1.0250);">f[Hz]</span>
<span class="t" style="font-size:11.5px;color:#000;font-weight:bold;left:1574.59px;top:392.87px;transform:scaleX(1.0048);">Channels selection</span>
<span class="t" style="font-size:11.5px;color:#000;font-weight:bold;left:1580.79px;top:411.77px;transform:scaleX(0.9579);">All Channels</span>
<span class="t" style="font-size:11.5px;color:#f01020;left:1661.57px;top:848.17px;transform:scaleX(0.8332);">STOP</span>
</body></html>
